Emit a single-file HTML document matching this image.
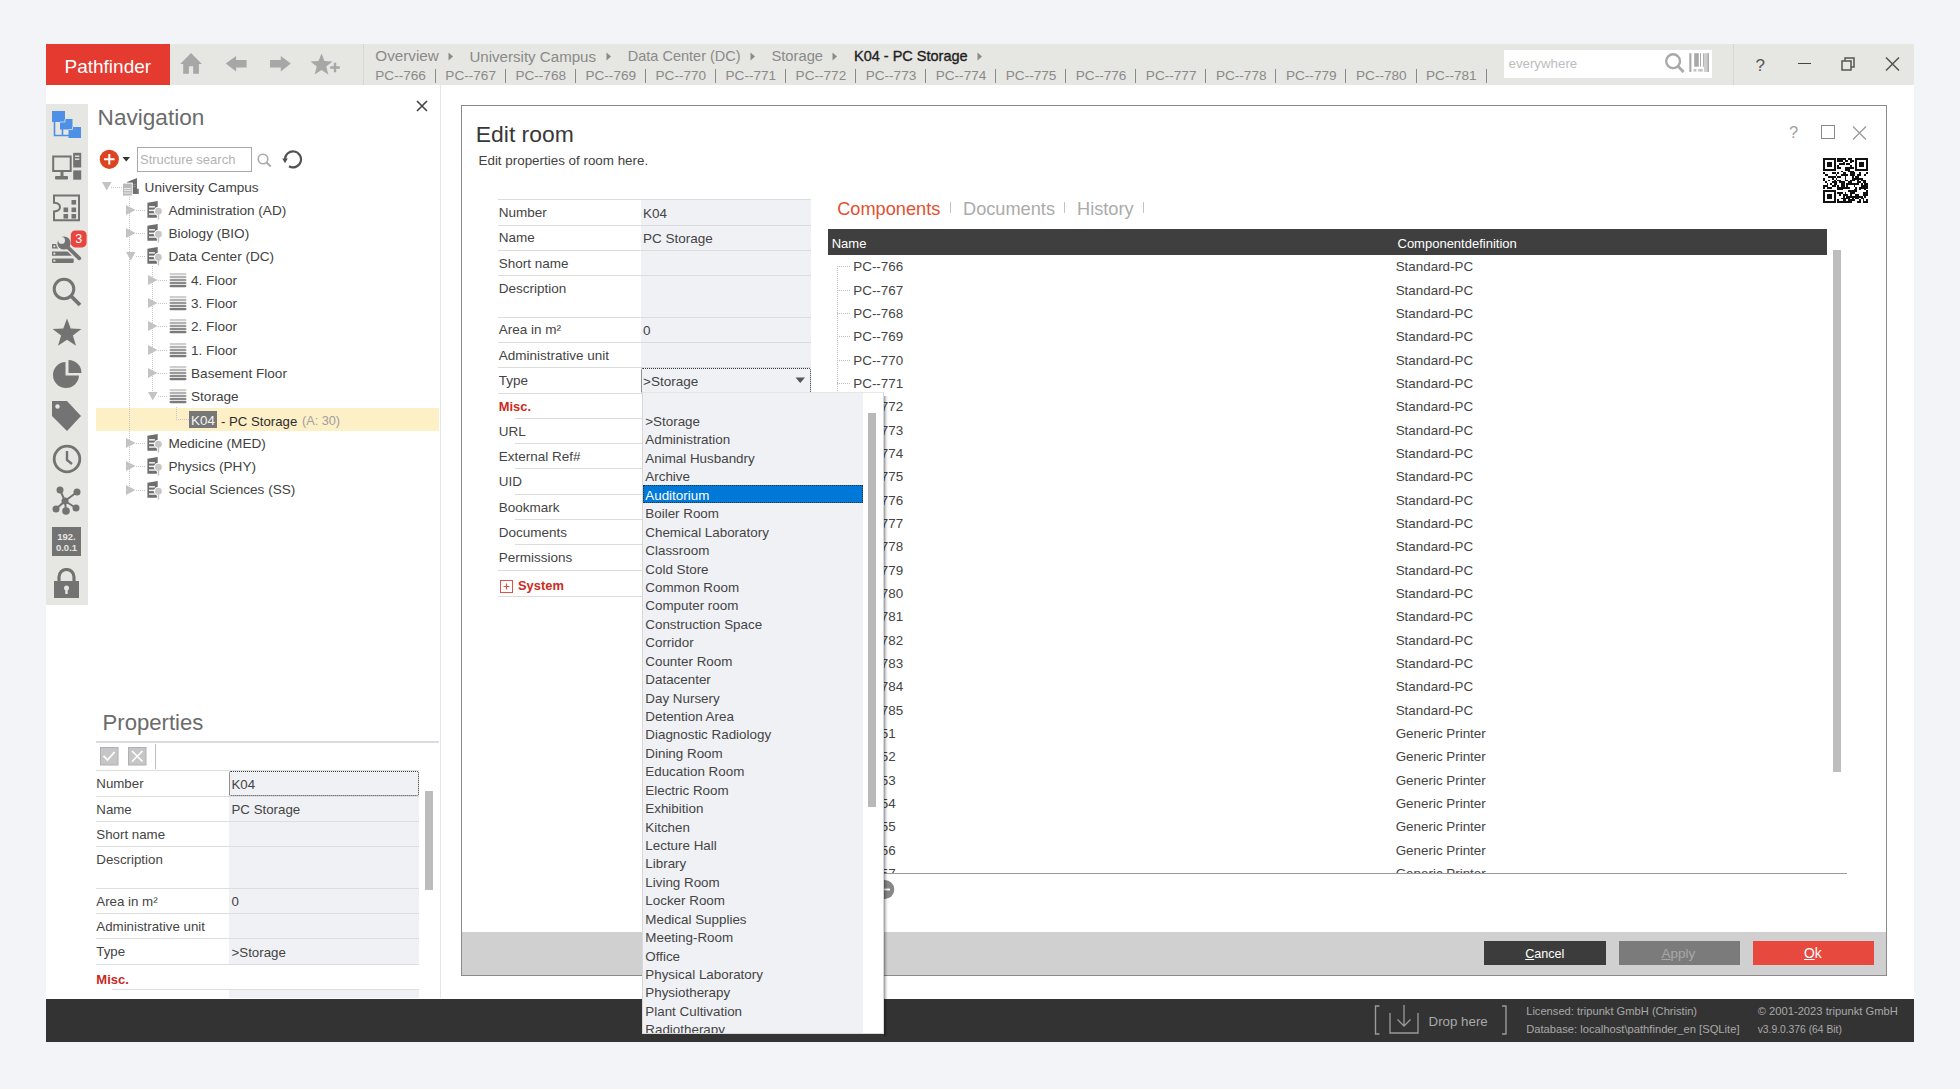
<!DOCTYPE html>
<html><head><meta charset="utf-8"><title>Pathfinder</title>
<style>
html,body{margin:0;padding:0;}
body{width:1960px;height:1089px;background:#f3f4f8;position:relative;overflow:hidden;font-family:"Liberation Sans", sans-serif;}
div{box-sizing:border-box;}
</style></head><body>
<div style="position:absolute;left:46px;top:44px;width:1868px;height:998px;background:#fff"></div>
<div style="position:absolute;left:46px;top:44px;width:1868px;height:41px;background:#e6e6e2"></div>
<div style="position:absolute;left:46px;top:44px;width:124px;height:41px;background:#e53a2f"></div>
<div style="position:absolute;left:64.50px;top:56.92px;font-size:19px;line-height:1;color:#fff;font-weight:400;white-space:pre;">Pathfinder</div>
<svg style="position:absolute;left:180px;top:52px;" width="22" height="22" viewBox="0 0 22 22"><path d="M11 1 L21.9 12 H18.9 V21.8 H13.2 V14.2 H8.9 V21.8 H3.2 V12 H0.2 Z" fill="#a7a7a7"/></svg>
<svg style="position:absolute;left:225px;top:55px;" width="22" height="18" viewBox="0 0 22 18"><path d="M0.7 8.6 L11.1 1 V5.1 H21.6 V12.5 H11.1 V16.4 Z" fill="#a7a7a7"/></svg>
<svg style="position:absolute;left:269px;top:55px;" width="23" height="18" viewBox="0 0 23 18"><path d="M21.8 8.6 L11.8 1 V5.1 H1 V12.5 H11.8 V16.4 Z" fill="#a7a7a7"/></svg>
<svg style="position:absolute;left:310px;top:53px;" width="32" height="22" viewBox="0 0 32 22"><path d="M11.50 0.40 L14.44 7.95 L22.53 8.42 L16.26 13.55 L18.32 21.38 L11.50 17.00 L4.68 21.38 L6.74 13.55 L0.47 8.42 L8.56 7.95 Z" fill="#a7a7a7"/><path d="M20.2 14.5 H29.8 M25 9.7 V19.3" stroke="#a7a7a7" stroke-width="2.4"/></svg>
<div style="position:absolute;left:363px;top:44px;width:1px;height:41px;background:#d6d6d2"></div>
<div style="position:absolute;left:1733px;top:44px;width:1px;height:41px;background:#d6d6d2"></div>
<div style="position:absolute;left:1504px;top:50px;width:208px;height:28px;background:#fff"></div>
<div style="position:absolute;left:1508.50px;top:56.74px;font-size:13.3px;line-height:1;color:#bdbdbd;font-weight:400;white-space:pre;">everywhere</div>
<svg style="position:absolute;left:1655px;top:48px;" width="60" height="32" viewBox="0 0 60 32"><circle cx="18.1" cy="13.2" r="6.9" fill="none" stroke="#a9a9a9" stroke-width="2.4"/><path d="M23 18.3 L28.6 24" stroke="#a9a9a9" stroke-width="2.8"/><rect x="34.3" y="5.2" width="2.1" height="18.7" fill="#a8a8a8"/><rect x="39.2" y="5.2" width="4.6" height="13.5" fill="#a8a8a8"/><rect x="45" y="5.2" width="1" height="13.5" fill="#a8a8a8"/><rect x="48.1" y="5.2" width="1" height="13.5" fill="#a8a8a8"/><rect x="49.1" y="5.2" width="4.8" height="18.7" fill="#cdcdcd"/><rect x="52.6" y="5.2" width="1.3" height="18.7" fill="#a8a8a8"/><rect x="38.5" y="21" width="3" height="2.6" fill="#c4c4c4"/><rect x="43.2" y="21" width="4.5" height="2.6" fill="#c4c4c4"/></svg>
<div style="position:absolute;left:1755.50px;top:56.91px;font-size:17px;line-height:1;color:#555;font-weight:400;white-space:pre;">?</div>
<div style="position:absolute;left:1798px;top:63px;width:13px;height:1px;background:#444"></div>
<svg style="position:absolute;left:1841px;top:57px;" width="15" height="14" viewBox="0 0 15 14"><rect x="1" y="4" width="9" height="9" fill="none" stroke="#555" stroke-width="1.5"/><path d="M4 4 V1 H13 V10 H10" fill="none" stroke="#555" stroke-width="1.5"/></svg>
<svg style="position:absolute;left:1885px;top:57px;" width="15" height="14" viewBox="0 0 15 14"><path d="M1 0.5 L14 13.5 M14 0.5 L1 13.5" stroke="#555" stroke-width="1.5"/></svg>
<div style="position:absolute;left:46px;top:999px;width:1868px;height:43px;background:#333"></div>
<div style="position:absolute;left:46px;top:104px;width:42px;height:501px;background:#e6e6e2"></div>
<svg style="position:absolute;left:51px;top:110px;" width="32" height="29" viewBox="0 0 32 29"><path d="M3.5 10 V25.5 H18 M11.5 18 V25.5" fill="none" stroke="#4d90e6" stroke-width="1.6"/><rect x="1" y="1" width="13" height="11" fill="#4d90e6"/><rect x="9" y="9" width="12.5" height="10.5" fill="#4d90e6"/><rect x="17.5" y="17" width="12.5" height="11" fill="#4d90e6"/><path d="M9 12 H14 V9" fill="none" stroke="#e6e6e2" stroke-width="0.8"/><path d="M17.5 19.5 H21.5 V17" fill="none" stroke="#e6e6e2" stroke-width="0.8"/></svg>
<svg style="position:absolute;left:51px;top:152px;" width="32" height="29" viewBox="0 0 32 29"><rect x="2.2" y="4.5" width="17.5" height="14.5" fill="none" stroke="#737373" stroke-width="2"/><rect x="9.5" y="19" width="3" height="5" fill="#737373"/><rect x="4" y="24" width="13" height="3.5" rx="1" fill="#737373"/><rect x="22.2" y="0.8" width="8" height="14.7" fill="#737373"/><rect x="24" y="3.5" width="4.4" height="1.4" fill="#e6e6e2"/><rect x="24" y="6.5" width="4.4" height="1.4" fill="#e6e6e2"/><rect x="22.2" y="18.4" width="8" height="9.3" fill="#737373"/></svg>
<svg style="position:absolute;left:51px;top:193px;" width="32" height="30" viewBox="0 0 32 30"><path d="M3 2.4 H28 V27.2 H3 V18.5 Q9 18 9 14.3 Q9 10 3 9.8 Z" fill="none" stroke="#737373" stroke-width="2"/><rect x="20.5" y="7" width="4.6" height="4.6" fill="#737373"/><rect x="12.5" y="14.5" width="4.6" height="4.6" fill="#737373"/><rect x="20.5" y="14.5" width="4.6" height="4.6" fill="#737373"/><rect x="12.5" y="21" width="4.6" height="4.6" fill="#737373"/><rect x="20.5" y="21" width="4.6" height="4.6" fill="#737373"/></svg>
<svg style="position:absolute;left:51px;top:230px;" width="37" height="35" viewBox="0 0 37 35"><defs><mask id="wm"><rect x="0" y="0" width="37" height="35" fill="#fff"/><circle cx="10.6" cy="10.4" r="3.4" fill="#000"/><path d="M5 9 L9 5 L11 1 L3 1 L1 3 Z" fill="#000"/><path d="M7.2 10.4 L10.6 7 L6 2.4 L2.6 5.8 Z" fill="#000"/></mask></defs><path d="M1 14.1 H6.5 L10.5 18.5 H1 Z" fill="#737373"/><path d="M1 21.5 H16.8 L21 25.7 H1 Z" fill="#737373"/><rect x="1" y="28.5" width="21.7" height="4.4" rx="1" fill="#737373"/><rect x="2.4" y="15.4" width="1.9" height="1.8" fill="#e6e6e2"/><rect x="2.4" y="22.7" width="1.9" height="1.8" fill="#e6e6e2"/><rect x="2.4" y="29.8" width="1.9" height="1.8" fill="#e6e6e2"/><g mask="url(#wm)"><circle cx="13" cy="13" r="8" fill="#e6e6e2"/></g><path d="M16 16.5 L28.3 28.3" stroke="#e6e6e2" stroke-width="6.2" stroke-linecap="round"/><g mask="url(#wm)"><circle cx="13" cy="13" r="6.6" fill="#737373"/></g><path d="M16 16.5 L28.3 28.3" stroke="#737373" stroke-width="3.8" stroke-linecap="round"/><rect x="19.8" y="0.5" width="15.8" height="16.9" rx="4.5" fill="#e8453f"/><text x="27.7" y="13.3" font-family="Liberation Sans" font-size="12.5" fill="#fff" text-anchor="middle">3</text></svg>
<svg style="position:absolute;left:51px;top:276px;" width="32" height="32" viewBox="0 0 32 32"><circle cx="13" cy="13" r="9.8" fill="none" stroke="#737373" stroke-width="3"/><path d="M20 20 L29 29" stroke="#737373" stroke-width="3.8"/></svg>
<svg style="position:absolute;left:52px;top:318px;" width="30" height="29" viewBox="0 0 30 29"><path d="M15 0.5 L18.7 10.6 L29.4 10.9 L20.9 17.5 L24 27.8 L15 21.7 L6 27.8 L9.1 17.5 L0.6 10.9 L11.3 10.6 Z" fill="#737373"/></svg>
<svg style="position:absolute;left:52px;top:360px;" width="30" height="30" viewBox="0 0 30 30"><path d="M13.5 2 A13 13 0 1 0 27 15.5 L13.5 15.5 Z" fill="#737373"/><path d="M16.5 0 A13 13 0 0 1 29.5 13 L16.5 13 Z" fill="#737373"/></svg>
<svg style="position:absolute;left:52px;top:401px;" width="30" height="31" viewBox="0 0 30 31"><path d="M0 0 H15 L29 15 L15 30 L0 15 Z" fill="#737373"/><circle cx="5.5" cy="5.5" r="2.2" fill="#e6e6e2"/></svg>
<svg style="position:absolute;left:52px;top:444px;" width="30" height="30" viewBox="0 0 30 30"><circle cx="15" cy="15" r="12.8" fill="none" stroke="#737373" stroke-width="2.8"/><path d="M15 7 V16 L20 20" fill="none" stroke="#737373" stroke-width="2.4"/></svg>
<svg style="position:absolute;left:52px;top:486px;" width="30" height="30" viewBox="0 0 30 30"><path d="M8 4 L13 15 L25 6 M13 15 L4 23 M13 15 L14 25 M13 15 L24 22" fill="none" stroke="#737373" stroke-width="2"/><circle cx="8" cy="4" r="3.5" fill="#737373"/><circle cx="25" cy="6" r="3.5" fill="#737373"/><circle cx="13" cy="15" r="3.5" fill="#737373"/><circle cx="4" cy="23" r="3.5" fill="#737373"/><circle cx="14" cy="25" r="3.8" fill="#737373"/><circle cx="24" cy="22" r="3.5" fill="#737373"/></svg>
<svg style="position:absolute;left:52px;top:527px;" width="30" height="30" viewBox="0 0 30 30"><rect x="0" y="0" width="29" height="29" fill="#737373"/><text x="14.5" y="12.5" font-family="Liberation Sans" font-weight="700" font-size="9.5" fill="#e6e6e2" text-anchor="middle">192.</text><text x="14.5" y="24" font-family="Liberation Sans" font-weight="700" font-size="9.5" fill="#e6e6e2" text-anchor="middle">0.0.1</text></svg>
<svg style="position:absolute;left:53px;top:568px;" width="27" height="31" viewBox="0 0 27 31"><path d="M6 14 V9 A7.5 7.5 0 0 1 21 9 V14" fill="none" stroke="#737373" stroke-width="3.2"/><rect x="1" y="13" width="25" height="17" fill="#737373"/><circle cx="13.5" cy="20" r="2.5" fill="#e6e6e2"/><rect x="12.3" y="20" width="2.4" height="6" fill="#e6e6e2"/></svg>
<div style="position:absolute;left:440px;top:85px;width:1px;height:913px;background:#e4e6ea"></div>
<div style="position:absolute;left:97.60px;top:107.17px;font-size:22.6px;line-height:1;color:#6b6b6b;font-weight:300;white-space:pre;">Navigation</div>
<svg style="position:absolute;left:416px;top:100px;" width="12" height="12" viewBox="0 0 12 12"><path d="M1 1 L11 11 M11 1 L1 11" stroke="#444" stroke-width="1.6"/></svg>
<svg style="position:absolute;left:99px;top:149px;" width="21" height="21" viewBox="0 0 21 21"><circle cx="10.3" cy="10.3" r="9.6" fill="#dc4320"/><path d="M10.3 5 V15.6 M5 10.3 H15.6" stroke="#fff" stroke-width="2"/></svg>
<svg style="position:absolute;left:122px;top:157px;" width="9" height="5" viewBox="0 0 9 5"><path d="M0.5 0 H8 L4.25 4.5 Z" fill="#333"/></svg>
<div style="position:absolute;left:137px;top:147px;width:115px;height:25px;border:1px solid #a9a9a9;background:#fff"></div>
<div style="position:absolute;left:140.00px;top:153.30px;font-size:13px;line-height:1;color:#b3b3b3;font-weight:400;white-space:pre;">Structure search</div>
<svg style="position:absolute;left:257px;top:153px;" width="16" height="14" viewBox="0 0 16 14"><circle cx="6" cy="6" r="4.8" fill="none" stroke="#ababab" stroke-width="1.6"/><path d="M9.5 9.5 L13.8 13.5" stroke="#ababab" stroke-width="2"/></svg>
<svg style="position:absolute;left:282px;top:150px;" width="22" height="19" viewBox="0 0 22 19"><path d="M3 9.4 A8 8 0 1 1 7 16.3" fill="none" stroke="#525252" stroke-width="2.2"/><path d="M0.2 8.6 L5.8 8.6 L3 13.2 Z" fill="#525252"/></svg>
<div style="position:absolute;left:96px;top:408px;width:343px;height:23px;background:#fdefc6"></div>
<div style="position:absolute;left:129px;top:197px;width:1px;height:293px;background:repeating-linear-gradient(180deg,#c6c6c6 0 1px,transparent 1px 2px)"></div>
<div style="position:absolute;left:152px;top:266px;width:1px;height:132px;background:repeating-linear-gradient(180deg,#c6c6c6 0 1px,transparent 1px 2px)"></div>
<div style="position:absolute;left:176px;top:407px;width:1px;height:13px;background:repeating-linear-gradient(180deg,#c6c6c6 0 1px,transparent 1px 2px)"></div>
<div style="position:absolute;left:176px;top:419px;width:13px;height:1px;background:repeating-linear-gradient(90deg,#c6c6c6 0 1px,transparent 1px 2px)"></div>
<div style="position:absolute;left:111px;top:186.5px;width:12px;height:1px;background:repeating-linear-gradient(90deg,#c6c6c6 0 1px,transparent 1px 2px)"></div>
<svg style="position:absolute;left:101.5px;top:182.1px;" width="10" height="9" viewBox="0 0 10 9"><path d="M0 0 H9.5 L4.75 8.5 Z" fill="#c3c3c3"/></svg>
<svg style="position:absolute;left:122px;top:178px;" width="18" height="19" viewBox="0 0 18 19"><path d="M5 4 L15 0 V16 H5 Z" fill="#6e6e6e"/><rect x="15" y="10.7" width="1.8" height="5.3" fill="#7a7a7a"/><rect x="11.5" y="6" width="2" height="1" fill="#999"/><rect x="11.5" y="8" width="2" height="1" fill="#999"/><rect x="0" y="4.6" width="10.8" height="14" fill="#fff"/><rect x="1" y="5.6" width="8.8" height="12" fill="#b9b9b9"/><rect x="2" y="10" width="6.8" height="1.1" fill="#e8e8e8"/><rect x="2" y="12" width="6.8" height="1.1" fill="#e8e8e8"/><rect x="2" y="14.5" width="6.8" height="1.1" fill="#e8e8e8"/></svg>
<div style="position:absolute;left:144.60px;top:180.59px;font-size:13.6px;line-height:1;color:#424242;font-weight:400;white-space:pre;">University Campus</div>
<svg style="position:absolute;left:125.8px;top:204.9px;" width="10" height="10" viewBox="0 0 10 10"><path d="M0 0 L9.5 5 L0 10 Z" fill="#c3c3c3"/></svg>
<div style="position:absolute;left:135.8px;top:210px;width:10.0px;height:1px;background:repeating-linear-gradient(90deg,#c6c6c6 0 1px,transparent 1px 2px)"></div>
<svg style="position:absolute;left:147px;top:201px;" width="16" height="20" viewBox="0 0 16 20"><path d="M0.4 1.7 L10.7 0 V16.8 H0.4 Z" fill="#6e6e6e"/><rect x="2" y="5.1" width="5.9" height="1.5" fill="#f2f2f2"/><rect x="2" y="8.6" width="5.9" height="1.5" fill="#f2f2f2"/><rect x="2" y="12.3" width="5.9" height="1.5" fill="#f2f2f2"/><circle cx="11.4" cy="10.2" r="4.5" fill="#fff"/><rect x="9.9" y="12" width="3" height="7.5" fill="#fff"/><circle cx="11.4" cy="10.2" r="3.4" fill="#c6c6c6"/><rect x="10.7" y="12.5" width="1.5" height="6" fill="#c6c6c6"/></svg>
<div style="position:absolute;left:168.40px;top:203.89px;font-size:13.6px;line-height:1;color:#424242;font-weight:400;white-space:pre;">Administration (AD)</div>
<svg style="position:absolute;left:125.8px;top:228.2px;" width="10" height="10" viewBox="0 0 10 10"><path d="M0 0 L9.5 5 L0 10 Z" fill="#c3c3c3"/></svg>
<div style="position:absolute;left:135.8px;top:233px;width:10.0px;height:1px;background:repeating-linear-gradient(90deg,#c6c6c6 0 1px,transparent 1px 2px)"></div>
<svg style="position:absolute;left:147px;top:224px;" width="16" height="20" viewBox="0 0 16 20"><path d="M0.4 1.7 L10.7 0 V16.8 H0.4 Z" fill="#6e6e6e"/><rect x="2" y="5.1" width="5.9" height="1.5" fill="#f2f2f2"/><rect x="2" y="8.6" width="5.9" height="1.5" fill="#f2f2f2"/><rect x="2" y="12.3" width="5.9" height="1.5" fill="#f2f2f2"/><circle cx="11.4" cy="10.2" r="4.5" fill="#fff"/><rect x="9.9" y="12" width="3" height="7.5" fill="#fff"/><circle cx="11.4" cy="10.2" r="3.4" fill="#c6c6c6"/><rect x="10.7" y="12.5" width="1.5" height="6" fill="#c6c6c6"/></svg>
<div style="position:absolute;left:168.40px;top:227.19px;font-size:13.6px;line-height:1;color:#424242;font-weight:400;white-space:pre;">Biology (BIO)</div>
<svg style="position:absolute;left:125.8px;top:252.0px;" width="10" height="9" viewBox="0 0 10 9"><path d="M0 0 H9.5 L4.75 8.5 Z" fill="#c3c3c3"/></svg>
<div style="position:absolute;left:135.8px;top:256px;width:10.0px;height:1px;background:repeating-linear-gradient(90deg,#c6c6c6 0 1px,transparent 1px 2px)"></div>
<svg style="position:absolute;left:147px;top:247px;" width="16" height="20" viewBox="0 0 16 20"><path d="M0.4 1.7 L10.7 0 V16.8 H0.4 Z" fill="#6e6e6e"/><rect x="2" y="5.1" width="5.9" height="1.5" fill="#f2f2f2"/><rect x="2" y="8.6" width="5.9" height="1.5" fill="#f2f2f2"/><rect x="2" y="12.3" width="5.9" height="1.5" fill="#f2f2f2"/><circle cx="11.4" cy="10.2" r="4.5" fill="#fff"/><rect x="9.9" y="12" width="3" height="7.5" fill="#fff"/><circle cx="11.4" cy="10.2" r="3.4" fill="#c6c6c6"/><rect x="10.7" y="12.5" width="1.5" height="6" fill="#c6c6c6"/></svg>
<div style="position:absolute;left:168.40px;top:250.49px;font-size:13.6px;line-height:1;color:#424242;font-weight:400;white-space:pre;">Data Center (DC)</div>
<svg style="position:absolute;left:148.3px;top:274.8px;" width="10" height="10" viewBox="0 0 10 10"><path d="M0 0 L9.5 5 L0 10 Z" fill="#c3c3c3"/></svg>
<div style="position:absolute;left:158.3px;top:280px;width:10.0px;height:1px;background:repeating-linear-gradient(90deg,#c6c6c6 0 1px,transparent 1px 2px)"></div>
<svg style="position:absolute;left:169px;top:273px;" width="18" height="15" viewBox="0 0 18 15"><rect x="0.5" y="0" width="17" height="2.2" rx="1.1" fill="#cfcfcf"/><rect x="0.5" y="3" width="17" height="2.2" rx="1.1" fill="#b3b3b3"/><rect x="0.5" y="6" width="17" height="2.2" rx="1.1" fill="#9a9a9a"/><rect x="0.5" y="9" width="17" height="2.2" rx="1.1" fill="#8a8a8a"/><rect x="0.5" y="12" width="17" height="2.2" rx="1.1" fill="#7a7a7a"/></svg>
<div style="position:absolute;left:191.00px;top:273.79px;font-size:13.6px;line-height:1;color:#424242;font-weight:400;white-space:pre;">4. Floor</div>
<svg style="position:absolute;left:148.3px;top:298.1px;" width="10" height="10" viewBox="0 0 10 10"><path d="M0 0 L9.5 5 L0 10 Z" fill="#c3c3c3"/></svg>
<div style="position:absolute;left:158.3px;top:303px;width:10.0px;height:1px;background:repeating-linear-gradient(90deg,#c6c6c6 0 1px,transparent 1px 2px)"></div>
<svg style="position:absolute;left:169px;top:296px;" width="18" height="15" viewBox="0 0 18 15"><rect x="0.5" y="0" width="17" height="2.2" rx="1.1" fill="#cfcfcf"/><rect x="0.5" y="3" width="17" height="2.2" rx="1.1" fill="#b3b3b3"/><rect x="0.5" y="6" width="17" height="2.2" rx="1.1" fill="#9a9a9a"/><rect x="0.5" y="9" width="17" height="2.2" rx="1.1" fill="#8a8a8a"/><rect x="0.5" y="12" width="17" height="2.2" rx="1.1" fill="#7a7a7a"/></svg>
<div style="position:absolute;left:191.00px;top:297.09px;font-size:13.6px;line-height:1;color:#424242;font-weight:400;white-space:pre;">3. Floor</div>
<svg style="position:absolute;left:148.3px;top:321.4px;" width="10" height="10" viewBox="0 0 10 10"><path d="M0 0 L9.5 5 L0 10 Z" fill="#c3c3c3"/></svg>
<div style="position:absolute;left:158.3px;top:326px;width:10.0px;height:1px;background:repeating-linear-gradient(90deg,#c6c6c6 0 1px,transparent 1px 2px)"></div>
<svg style="position:absolute;left:169px;top:319px;" width="18" height="15" viewBox="0 0 18 15"><rect x="0.5" y="0" width="17" height="2.2" rx="1.1" fill="#cfcfcf"/><rect x="0.5" y="3" width="17" height="2.2" rx="1.1" fill="#b3b3b3"/><rect x="0.5" y="6" width="17" height="2.2" rx="1.1" fill="#9a9a9a"/><rect x="0.5" y="9" width="17" height="2.2" rx="1.1" fill="#8a8a8a"/><rect x="0.5" y="12" width="17" height="2.2" rx="1.1" fill="#7a7a7a"/></svg>
<div style="position:absolute;left:191.00px;top:320.39px;font-size:13.6px;line-height:1;color:#424242;font-weight:400;white-space:pre;">2. Floor</div>
<svg style="position:absolute;left:148.3px;top:344.7px;" width="10" height="10" viewBox="0 0 10 10"><path d="M0 0 L9.5 5 L0 10 Z" fill="#c3c3c3"/></svg>
<div style="position:absolute;left:158.3px;top:350px;width:10.0px;height:1px;background:repeating-linear-gradient(90deg,#c6c6c6 0 1px,transparent 1px 2px)"></div>
<svg style="position:absolute;left:169px;top:343px;" width="18" height="15" viewBox="0 0 18 15"><rect x="0.5" y="0" width="17" height="2.2" rx="1.1" fill="#cfcfcf"/><rect x="0.5" y="3" width="17" height="2.2" rx="1.1" fill="#b3b3b3"/><rect x="0.5" y="6" width="17" height="2.2" rx="1.1" fill="#9a9a9a"/><rect x="0.5" y="9" width="17" height="2.2" rx="1.1" fill="#8a8a8a"/><rect x="0.5" y="12" width="17" height="2.2" rx="1.1" fill="#7a7a7a"/></svg>
<div style="position:absolute;left:191.00px;top:343.69px;font-size:13.6px;line-height:1;color:#424242;font-weight:400;white-space:pre;">1. Floor</div>
<svg style="position:absolute;left:148.3px;top:368.0px;" width="10" height="10" viewBox="0 0 10 10"><path d="M0 0 L9.5 5 L0 10 Z" fill="#c3c3c3"/></svg>
<div style="position:absolute;left:158.3px;top:373px;width:10.0px;height:1px;background:repeating-linear-gradient(90deg,#c6c6c6 0 1px,transparent 1px 2px)"></div>
<svg style="position:absolute;left:169px;top:366px;" width="18" height="15" viewBox="0 0 18 15"><rect x="0.5" y="0" width="17" height="2.2" rx="1.1" fill="#cfcfcf"/><rect x="0.5" y="3" width="17" height="2.2" rx="1.1" fill="#b3b3b3"/><rect x="0.5" y="6" width="17" height="2.2" rx="1.1" fill="#9a9a9a"/><rect x="0.5" y="9" width="17" height="2.2" rx="1.1" fill="#8a8a8a"/><rect x="0.5" y="12" width="17" height="2.2" rx="1.1" fill="#7a7a7a"/></svg>
<div style="position:absolute;left:191.00px;top:366.99px;font-size:13.6px;line-height:1;color:#424242;font-weight:400;white-space:pre;">Basement Floor</div>
<svg style="position:absolute;left:148.3px;top:391.8px;" width="10" height="9" viewBox="0 0 10 9"><path d="M0 0 H9.5 L4.75 8.5 Z" fill="#c3c3c3"/></svg>
<div style="position:absolute;left:158.3px;top:396px;width:10.0px;height:1px;background:repeating-linear-gradient(90deg,#c6c6c6 0 1px,transparent 1px 2px)"></div>
<svg style="position:absolute;left:169px;top:389px;" width="18" height="15" viewBox="0 0 18 15"><rect x="0.5" y="0" width="17" height="2.2" rx="1.1" fill="#cfcfcf"/><rect x="0.5" y="3" width="17" height="2.2" rx="1.1" fill="#b3b3b3"/><rect x="0.5" y="6" width="17" height="2.2" rx="1.1" fill="#9a9a9a"/><rect x="0.5" y="9" width="17" height="2.2" rx="1.1" fill="#8a8a8a"/><rect x="0.5" y="12" width="17" height="2.2" rx="1.1" fill="#7a7a7a"/></svg>
<div style="position:absolute;left:191.00px;top:390.29px;font-size:13.6px;line-height:1;color:#424242;font-weight:400;white-space:pre;">Storage</div>
<div style="position:absolute;left:189px;top:411px;width:28px;height:17px;background:#777"></div>
<div style="position:absolute;left:191.00px;top:414.46px;font-size:13.4px;line-height:1;color:#f4f4f4;font-weight:400;white-space:pre;">K04</div>
<div style="position:absolute;left:221.00px;top:414.63px;font-size:13.2px;line-height:1;color:#2d2d2d;font-weight:400;white-space:pre;">- PC Storage</div>
<div style="position:absolute;left:302.00px;top:415.05px;font-size:12.7px;line-height:1;color:#a0a0a0;font-weight:400;white-space:pre;">(A: 30)</div>
<svg style="position:absolute;left:125.8px;top:437.9px;" width="10" height="10" viewBox="0 0 10 10"><path d="M0 0 L9.5 5 L0 10 Z" fill="#c3c3c3"/></svg>
<div style="position:absolute;left:135.8px;top:443px;width:10.0px;height:1px;background:repeating-linear-gradient(90deg,#c6c6c6 0 1px,transparent 1px 2px)"></div>
<svg style="position:absolute;left:147px;top:434px;" width="16" height="20" viewBox="0 0 16 20"><path d="M0.4 1.7 L10.7 0 V16.8 H0.4 Z" fill="#6e6e6e"/><rect x="2" y="5.1" width="5.9" height="1.5" fill="#f2f2f2"/><rect x="2" y="8.6" width="5.9" height="1.5" fill="#f2f2f2"/><rect x="2" y="12.3" width="5.9" height="1.5" fill="#f2f2f2"/><circle cx="11.4" cy="10.2" r="4.5" fill="#fff"/><rect x="9.9" y="12" width="3" height="7.5" fill="#fff"/><circle cx="11.4" cy="10.2" r="3.4" fill="#c6c6c6"/><rect x="10.7" y="12.5" width="1.5" height="6" fill="#c6c6c6"/></svg>
<div style="position:absolute;left:168.40px;top:436.89px;font-size:13.6px;line-height:1;color:#424242;font-weight:400;white-space:pre;">Medicine (MED)</div>
<svg style="position:absolute;left:125.8px;top:461.20000000000005px;" width="10" height="10" viewBox="0 0 10 10"><path d="M0 0 L9.5 5 L0 10 Z" fill="#c3c3c3"/></svg>
<div style="position:absolute;left:135.8px;top:466px;width:10.0px;height:1px;background:repeating-linear-gradient(90deg,#c6c6c6 0 1px,transparent 1px 2px)"></div>
<svg style="position:absolute;left:147px;top:457px;" width="16" height="20" viewBox="0 0 16 20"><path d="M0.4 1.7 L10.7 0 V16.8 H0.4 Z" fill="#6e6e6e"/><rect x="2" y="5.1" width="5.9" height="1.5" fill="#f2f2f2"/><rect x="2" y="8.6" width="5.9" height="1.5" fill="#f2f2f2"/><rect x="2" y="12.3" width="5.9" height="1.5" fill="#f2f2f2"/><circle cx="11.4" cy="10.2" r="4.5" fill="#fff"/><rect x="9.9" y="12" width="3" height="7.5" fill="#fff"/><circle cx="11.4" cy="10.2" r="3.4" fill="#c6c6c6"/><rect x="10.7" y="12.5" width="1.5" height="6" fill="#c6c6c6"/></svg>
<div style="position:absolute;left:168.40px;top:460.19px;font-size:13.6px;line-height:1;color:#424242;font-weight:400;white-space:pre;">Physics (PHY)</div>
<svg style="position:absolute;left:125.8px;top:484.5px;" width="10" height="10" viewBox="0 0 10 10"><path d="M0 0 L9.5 5 L0 10 Z" fill="#c3c3c3"/></svg>
<div style="position:absolute;left:135.8px;top:490px;width:10.0px;height:1px;background:repeating-linear-gradient(90deg,#c6c6c6 0 1px,transparent 1px 2px)"></div>
<svg style="position:absolute;left:147px;top:481px;" width="16" height="20" viewBox="0 0 16 20"><path d="M0.4 1.7 L10.7 0 V16.8 H0.4 Z" fill="#6e6e6e"/><rect x="2" y="5.1" width="5.9" height="1.5" fill="#f2f2f2"/><rect x="2" y="8.6" width="5.9" height="1.5" fill="#f2f2f2"/><rect x="2" y="12.3" width="5.9" height="1.5" fill="#f2f2f2"/><circle cx="11.4" cy="10.2" r="4.5" fill="#fff"/><rect x="9.9" y="12" width="3" height="7.5" fill="#fff"/><circle cx="11.4" cy="10.2" r="3.4" fill="#c6c6c6"/><rect x="10.7" y="12.5" width="1.5" height="6" fill="#c6c6c6"/></svg>
<div style="position:absolute;left:168.40px;top:483.49px;font-size:13.6px;line-height:1;color:#424242;font-weight:400;white-space:pre;">Social Sciences (SS)</div>
<div style="position:absolute;left:102.60px;top:711.79px;font-size:22.1px;line-height:1;color:#6b6b6b;font-weight:300;white-space:pre;">Properties</div>
<div style="position:absolute;left:96px;top:741px;width:343px;height:2px;background:#d9dce3"></div>
<svg style="position:absolute;left:100px;top:747px;" width="19" height="19" viewBox="0 0 19 19"><rect x="0.5" y="0.5" width="17.5" height="17.5" fill="#c6c6c6" stroke="#b0b0b0"/><path d="M3.5 9 L7.5 13 L14.5 5" fill="none" stroke="#fff" stroke-width="1.8"/></svg>
<svg style="position:absolute;left:128px;top:747px;" width="19" height="19" viewBox="0 0 19 19"><rect x="0.5" y="0.5" width="17.5" height="17.5" fill="#c6c6c6" stroke="#b0b0b0"/><path d="M4 4 L14.5 14.5 M14.5 4 L4 14.5" fill="none" stroke="#fff" stroke-width="1.6"/></svg>
<div style="position:absolute;left:155px;top:744px;width:1px;height:25px;background:#bdbdbd"></div>
<div style="position:absolute;left:229px;top:771px;width:190px;height:193px;background:#f0f1f5"></div>
<div style="position:absolute;left:229px;top:990px;width:190px;height:8px;background:#f0f1f5"></div>
<div style="position:absolute;left:96px;top:770px;width:323px;height:1px;background:#dedede"></div>
<div style="position:absolute;left:96px;top:796px;width:323px;height:1px;background:#dedede"></div>
<div style="position:absolute;left:96px;top:821px;width:323px;height:1px;background:#dedede"></div>
<div style="position:absolute;left:96px;top:846px;width:323px;height:1px;background:#dedede"></div>
<div style="position:absolute;left:96px;top:888px;width:323px;height:1px;background:#dedede"></div>
<div style="position:absolute;left:96px;top:913px;width:323px;height:1px;background:#dedede"></div>
<div style="position:absolute;left:96px;top:938px;width:323px;height:1px;background:#dedede"></div>
<div style="position:absolute;left:96px;top:964px;width:323px;height:1px;background:#dedede"></div>
<div style="position:absolute;left:112px;top:989px;width:307px;height:1px;background:#dedede"></div>
<div style="position:absolute;left:229px;top:771px;width:190px;height:25px;border:1px dotted #333;border-radius:2px"></div>
<div style="position:absolute;left:96.30px;top:777.14px;font-size:13.3px;line-height:1;color:#444444;font-weight:400;white-space:pre;">Number</div>
<div style="position:absolute;left:231.50px;top:777.64px;font-size:13.3px;line-height:1;color:#444444;font-weight:400;white-space:pre;">K04</div>
<div style="position:absolute;left:96.30px;top:802.64px;font-size:13.3px;line-height:1;color:#444444;font-weight:400;white-space:pre;">Name</div>
<div style="position:absolute;left:231.50px;top:803.14px;font-size:13.3px;line-height:1;color:#444444;font-weight:400;white-space:pre;">PC Storage</div>
<div style="position:absolute;left:96.30px;top:827.84px;font-size:13.3px;line-height:1;color:#444444;font-weight:400;white-space:pre;">Short name</div>
<div style="position:absolute;left:96.30px;top:852.94px;font-size:13.3px;line-height:1;color:#444444;font-weight:400;white-space:pre;">Description</div>
<div style="position:absolute;left:96.30px;top:894.74px;font-size:13.3px;line-height:1;color:#444444;font-weight:400;white-space:pre;">Area in m²</div>
<div style="position:absolute;left:231.50px;top:895.24px;font-size:13.3px;line-height:1;color:#444444;font-weight:400;white-space:pre;">0</div>
<div style="position:absolute;left:96.30px;top:919.84px;font-size:13.3px;line-height:1;color:#444444;font-weight:400;white-space:pre;">Administrative unit</div>
<div style="position:absolute;left:96.30px;top:945.04px;font-size:13.3px;line-height:1;color:#444444;font-weight:400;white-space:pre;">Type</div>
<div style="position:absolute;left:231.50px;top:945.54px;font-size:13.3px;line-height:1;color:#444444;font-weight:400;white-space:pre;">&gt;Storage</div>
<div style="position:absolute;left:96.30px;top:972.50px;font-size:13px;line-height:1;color:#c8281e;font-weight:700;white-space:pre;">Misc.</div>
<div style="position:absolute;left:425px;top:791px;width:8px;height:99px;background:#bcbcbc"></div>
<div style="position:absolute;left:461px;top:105px;width:1426px;height:871px;border:1px solid #8a8a8a;background:#fff"></div>
<div style="position:absolute;left:475.80px;top:122.72px;font-size:22.9px;line-height:1;color:#383838;font-weight:400;white-space:pre;">Edit room</div>
<div style="position:absolute;left:478.50px;top:154.46px;font-size:13.4px;line-height:1;color:#424242;font-weight:400;white-space:pre;">Edit properties of room here.</div>
<div style="position:absolute;left:1789.00px;top:124.33px;font-size:16.5px;line-height:1;color:#a0a0a0;font-weight:400;white-space:pre;">?</div>
<div style="position:absolute;left:1821px;top:125px;width:14px;height:14px;border:1.5px solid #8a8a8a"></div>
<svg style="position:absolute;left:1852px;top:126px;" width="15" height="14" viewBox="0 0 15 14"><path d="M1 0.5 L14 13.5 M14 0.5 L1 13.5" stroke="#9a9a9a" stroke-width="1.3"/></svg>
<svg style="position:absolute;left:1823px;top:158px;" width="46" height="46" viewBox="0 0 46 46"><g fill="#111" shape-rendering="crispEdges"><rect x="0.00" y="0.00" width="1.85" height="1.85"/><rect x="1.80" y="0.00" width="1.85" height="1.85"/><rect x="3.60" y="0.00" width="1.85" height="1.85"/><rect x="5.40" y="0.00" width="1.85" height="1.85"/><rect x="7.20" y="0.00" width="1.85" height="1.85"/><rect x="9.00" y="0.00" width="1.85" height="1.85"/><rect x="10.80" y="0.00" width="1.85" height="1.85"/><rect x="14.40" y="0.00" width="1.85" height="1.85"/><rect x="16.20" y="0.00" width="1.85" height="1.85"/><rect x="18.00" y="0.00" width="1.85" height="1.85"/><rect x="19.80" y="0.00" width="1.85" height="1.85"/><rect x="21.60" y="0.00" width="1.85" height="1.85"/><rect x="25.20" y="0.00" width="1.85" height="1.85"/><rect x="27.00" y="0.00" width="1.85" height="1.85"/><rect x="32.40" y="0.00" width="1.85" height="1.85"/><rect x="34.20" y="0.00" width="1.85" height="1.85"/><rect x="36.00" y="0.00" width="1.85" height="1.85"/><rect x="37.80" y="0.00" width="1.85" height="1.85"/><rect x="39.60" y="0.00" width="1.85" height="1.85"/><rect x="41.40" y="0.00" width="1.85" height="1.85"/><rect x="43.20" y="0.00" width="1.85" height="1.85"/><rect x="0.00" y="1.80" width="1.85" height="1.85"/><rect x="10.80" y="1.80" width="1.85" height="1.85"/><rect x="14.40" y="1.80" width="1.85" height="1.85"/><rect x="16.20" y="1.80" width="1.85" height="1.85"/><rect x="18.00" y="1.80" width="1.85" height="1.85"/><rect x="21.60" y="1.80" width="1.85" height="1.85"/><rect x="23.40" y="1.80" width="1.85" height="1.85"/><rect x="27.00" y="1.80" width="1.85" height="1.85"/><rect x="28.80" y="1.80" width="1.85" height="1.85"/><rect x="32.40" y="1.80" width="1.85" height="1.85"/><rect x="43.20" y="1.80" width="1.85" height="1.85"/><rect x="0.00" y="3.60" width="1.85" height="1.85"/><rect x="3.60" y="3.60" width="1.85" height="1.85"/><rect x="5.40" y="3.60" width="1.85" height="1.85"/><rect x="7.20" y="3.60" width="1.85" height="1.85"/><rect x="10.80" y="3.60" width="1.85" height="1.85"/><rect x="19.80" y="3.60" width="1.85" height="1.85"/><rect x="27.00" y="3.60" width="1.85" height="1.85"/><rect x="32.40" y="3.60" width="1.85" height="1.85"/><rect x="36.00" y="3.60" width="1.85" height="1.85"/><rect x="37.80" y="3.60" width="1.85" height="1.85"/><rect x="39.60" y="3.60" width="1.85" height="1.85"/><rect x="43.20" y="3.60" width="1.85" height="1.85"/><rect x="0.00" y="5.40" width="1.85" height="1.85"/><rect x="3.60" y="5.40" width="1.85" height="1.85"/><rect x="5.40" y="5.40" width="1.85" height="1.85"/><rect x="7.20" y="5.40" width="1.85" height="1.85"/><rect x="10.80" y="5.40" width="1.85" height="1.85"/><rect x="16.20" y="5.40" width="1.85" height="1.85"/><rect x="18.00" y="5.40" width="1.85" height="1.85"/><rect x="19.80" y="5.40" width="1.85" height="1.85"/><rect x="23.40" y="5.40" width="1.85" height="1.85"/><rect x="25.20" y="5.40" width="1.85" height="1.85"/><rect x="32.40" y="5.40" width="1.85" height="1.85"/><rect x="36.00" y="5.40" width="1.85" height="1.85"/><rect x="37.80" y="5.40" width="1.85" height="1.85"/><rect x="39.60" y="5.40" width="1.85" height="1.85"/><rect x="43.20" y="5.40" width="1.85" height="1.85"/><rect x="0.00" y="7.20" width="1.85" height="1.85"/><rect x="3.60" y="7.20" width="1.85" height="1.85"/><rect x="5.40" y="7.20" width="1.85" height="1.85"/><rect x="7.20" y="7.20" width="1.85" height="1.85"/><rect x="10.80" y="7.20" width="1.85" height="1.85"/><rect x="14.40" y="7.20" width="1.85" height="1.85"/><rect x="27.00" y="7.20" width="1.85" height="1.85"/><rect x="32.40" y="7.20" width="1.85" height="1.85"/><rect x="36.00" y="7.20" width="1.85" height="1.85"/><rect x="37.80" y="7.20" width="1.85" height="1.85"/><rect x="39.60" y="7.20" width="1.85" height="1.85"/><rect x="43.20" y="7.20" width="1.85" height="1.85"/><rect x="0.00" y="9.00" width="1.85" height="1.85"/><rect x="10.80" y="9.00" width="1.85" height="1.85"/><rect x="14.40" y="9.00" width="1.85" height="1.85"/><rect x="16.20" y="9.00" width="1.85" height="1.85"/><rect x="21.60" y="9.00" width="1.85" height="1.85"/><rect x="23.40" y="9.00" width="1.85" height="1.85"/><rect x="25.20" y="9.00" width="1.85" height="1.85"/><rect x="27.00" y="9.00" width="1.85" height="1.85"/><rect x="28.80" y="9.00" width="1.85" height="1.85"/><rect x="32.40" y="9.00" width="1.85" height="1.85"/><rect x="43.20" y="9.00" width="1.85" height="1.85"/><rect x="0.00" y="10.80" width="1.85" height="1.85"/><rect x="1.80" y="10.80" width="1.85" height="1.85"/><rect x="3.60" y="10.80" width="1.85" height="1.85"/><rect x="5.40" y="10.80" width="1.85" height="1.85"/><rect x="7.20" y="10.80" width="1.85" height="1.85"/><rect x="9.00" y="10.80" width="1.85" height="1.85"/><rect x="10.80" y="10.80" width="1.85" height="1.85"/><rect x="21.60" y="10.80" width="1.85" height="1.85"/><rect x="23.40" y="10.80" width="1.85" height="1.85"/><rect x="25.20" y="10.80" width="1.85" height="1.85"/><rect x="32.40" y="10.80" width="1.85" height="1.85"/><rect x="34.20" y="10.80" width="1.85" height="1.85"/><rect x="36.00" y="10.80" width="1.85" height="1.85"/><rect x="37.80" y="10.80" width="1.85" height="1.85"/><rect x="39.60" y="10.80" width="1.85" height="1.85"/><rect x="41.40" y="10.80" width="1.85" height="1.85"/><rect x="43.20" y="10.80" width="1.85" height="1.85"/><rect x="18.00" y="12.60" width="1.85" height="1.85"/><rect x="25.20" y="12.60" width="1.85" height="1.85"/><rect x="27.00" y="12.60" width="1.85" height="1.85"/><rect x="28.80" y="12.60" width="1.85" height="1.85"/><rect x="0.00" y="14.40" width="1.85" height="1.85"/><rect x="9.00" y="14.40" width="1.85" height="1.85"/><rect x="10.80" y="14.40" width="1.85" height="1.85"/><rect x="14.40" y="14.40" width="1.85" height="1.85"/><rect x="19.80" y="14.40" width="1.85" height="1.85"/><rect x="21.60" y="14.40" width="1.85" height="1.85"/><rect x="27.00" y="14.40" width="1.85" height="1.85"/><rect x="28.80" y="14.40" width="1.85" height="1.85"/><rect x="30.60" y="14.40" width="1.85" height="1.85"/><rect x="36.00" y="14.40" width="1.85" height="1.85"/><rect x="43.20" y="14.40" width="1.85" height="1.85"/><rect x="1.80" y="16.20" width="1.85" height="1.85"/><rect x="3.60" y="16.20" width="1.85" height="1.85"/><rect x="12.60" y="16.20" width="1.85" height="1.85"/><rect x="18.00" y="16.20" width="1.85" height="1.85"/><rect x="19.80" y="16.20" width="1.85" height="1.85"/><rect x="21.60" y="16.20" width="1.85" height="1.85"/><rect x="23.40" y="16.20" width="1.85" height="1.85"/><rect x="27.00" y="16.20" width="1.85" height="1.85"/><rect x="28.80" y="16.20" width="1.85" height="1.85"/><rect x="30.60" y="16.20" width="1.85" height="1.85"/><rect x="34.20" y="16.20" width="1.85" height="1.85"/><rect x="36.00" y="16.20" width="1.85" height="1.85"/><rect x="41.40" y="16.20" width="1.85" height="1.85"/><rect x="5.40" y="18.00" width="1.85" height="1.85"/><rect x="7.20" y="18.00" width="1.85" height="1.85"/><rect x="9.00" y="18.00" width="1.85" height="1.85"/><rect x="10.80" y="18.00" width="1.85" height="1.85"/><rect x="14.40" y="18.00" width="1.85" height="1.85"/><rect x="16.20" y="18.00" width="1.85" height="1.85"/><rect x="21.60" y="18.00" width="1.85" height="1.85"/><rect x="28.80" y="18.00" width="1.85" height="1.85"/><rect x="32.40" y="18.00" width="1.85" height="1.85"/><rect x="34.20" y="18.00" width="1.85" height="1.85"/><rect x="0.00" y="19.80" width="1.85" height="1.85"/><rect x="9.00" y="19.80" width="1.85" height="1.85"/><rect x="12.60" y="19.80" width="1.85" height="1.85"/><rect x="21.60" y="19.80" width="1.85" height="1.85"/><rect x="28.80" y="19.80" width="1.85" height="1.85"/><rect x="30.60" y="19.80" width="1.85" height="1.85"/><rect x="32.40" y="19.80" width="1.85" height="1.85"/><rect x="34.20" y="19.80" width="1.85" height="1.85"/><rect x="36.00" y="19.80" width="1.85" height="1.85"/><rect x="37.80" y="19.80" width="1.85" height="1.85"/><rect x="0.00" y="21.60" width="1.85" height="1.85"/><rect x="5.40" y="21.60" width="1.85" height="1.85"/><rect x="10.80" y="21.60" width="1.85" height="1.85"/><rect x="14.40" y="21.60" width="1.85" height="1.85"/><rect x="16.20" y="21.60" width="1.85" height="1.85"/><rect x="21.60" y="21.60" width="1.85" height="1.85"/><rect x="23.40" y="21.60" width="1.85" height="1.85"/><rect x="27.00" y="21.60" width="1.85" height="1.85"/><rect x="28.80" y="21.60" width="1.85" height="1.85"/><rect x="30.60" y="21.60" width="1.85" height="1.85"/><rect x="34.20" y="21.60" width="1.85" height="1.85"/><rect x="37.80" y="21.60" width="1.85" height="1.85"/><rect x="39.60" y="21.60" width="1.85" height="1.85"/><rect x="41.40" y="21.60" width="1.85" height="1.85"/><rect x="1.80" y="23.40" width="1.85" height="1.85"/><rect x="9.00" y="23.40" width="1.85" height="1.85"/><rect x="10.80" y="23.40" width="1.85" height="1.85"/><rect x="12.60" y="23.40" width="1.85" height="1.85"/><rect x="16.20" y="23.40" width="1.85" height="1.85"/><rect x="18.00" y="23.40" width="1.85" height="1.85"/><rect x="19.80" y="23.40" width="1.85" height="1.85"/><rect x="25.20" y="23.40" width="1.85" height="1.85"/><rect x="27.00" y="23.40" width="1.85" height="1.85"/><rect x="34.20" y="23.40" width="1.85" height="1.85"/><rect x="36.00" y="23.40" width="1.85" height="1.85"/><rect x="39.60" y="23.40" width="1.85" height="1.85"/><rect x="41.40" y="23.40" width="1.85" height="1.85"/><rect x="3.60" y="25.20" width="1.85" height="1.85"/><rect x="7.20" y="25.20" width="1.85" height="1.85"/><rect x="10.80" y="25.20" width="1.85" height="1.85"/><rect x="12.60" y="25.20" width="1.85" height="1.85"/><rect x="18.00" y="25.20" width="1.85" height="1.85"/><rect x="19.80" y="25.20" width="1.85" height="1.85"/><rect x="23.40" y="25.20" width="1.85" height="1.85"/><rect x="25.20" y="25.20" width="1.85" height="1.85"/><rect x="27.00" y="25.20" width="1.85" height="1.85"/><rect x="28.80" y="25.20" width="1.85" height="1.85"/><rect x="30.60" y="25.20" width="1.85" height="1.85"/><rect x="32.40" y="25.20" width="1.85" height="1.85"/><rect x="34.20" y="25.20" width="1.85" height="1.85"/><rect x="37.80" y="25.20" width="1.85" height="1.85"/><rect x="41.40" y="25.20" width="1.85" height="1.85"/><rect x="43.20" y="25.20" width="1.85" height="1.85"/><rect x="0.00" y="27.00" width="1.85" height="1.85"/><rect x="1.80" y="27.00" width="1.85" height="1.85"/><rect x="3.60" y="27.00" width="1.85" height="1.85"/><rect x="9.00" y="27.00" width="1.85" height="1.85"/><rect x="10.80" y="27.00" width="1.85" height="1.85"/><rect x="14.40" y="27.00" width="1.85" height="1.85"/><rect x="18.00" y="27.00" width="1.85" height="1.85"/><rect x="19.80" y="27.00" width="1.85" height="1.85"/><rect x="23.40" y="27.00" width="1.85" height="1.85"/><rect x="30.60" y="27.00" width="1.85" height="1.85"/><rect x="37.80" y="27.00" width="1.85" height="1.85"/><rect x="39.60" y="27.00" width="1.85" height="1.85"/><rect x="41.40" y="27.00" width="1.85" height="1.85"/><rect x="43.20" y="27.00" width="1.85" height="1.85"/><rect x="0.00" y="28.80" width="1.85" height="1.85"/><rect x="3.60" y="28.80" width="1.85" height="1.85"/><rect x="5.40" y="28.80" width="1.85" height="1.85"/><rect x="7.20" y="28.80" width="1.85" height="1.85"/><rect x="14.40" y="28.80" width="1.85" height="1.85"/><rect x="16.20" y="28.80" width="1.85" height="1.85"/><rect x="18.00" y="28.80" width="1.85" height="1.85"/><rect x="19.80" y="28.80" width="1.85" height="1.85"/><rect x="21.60" y="28.80" width="1.85" height="1.85"/><rect x="23.40" y="28.80" width="1.85" height="1.85"/><rect x="25.20" y="28.80" width="1.85" height="1.85"/><rect x="32.40" y="28.80" width="1.85" height="1.85"/><rect x="36.00" y="28.80" width="1.85" height="1.85"/><rect x="37.80" y="28.80" width="1.85" height="1.85"/><rect x="39.60" y="28.80" width="1.85" height="1.85"/><rect x="41.40" y="28.80" width="1.85" height="1.85"/><rect x="43.20" y="28.80" width="1.85" height="1.85"/><rect x="14.40" y="30.60" width="1.85" height="1.85"/><rect x="16.20" y="30.60" width="1.85" height="1.85"/><rect x="18.00" y="30.60" width="1.85" height="1.85"/><rect x="30.60" y="30.60" width="1.85" height="1.85"/><rect x="32.40" y="30.60" width="1.85" height="1.85"/><rect x="36.00" y="30.60" width="1.85" height="1.85"/><rect x="41.40" y="30.60" width="1.85" height="1.85"/><rect x="0.00" y="32.40" width="1.85" height="1.85"/><rect x="1.80" y="32.40" width="1.85" height="1.85"/><rect x="3.60" y="32.40" width="1.85" height="1.85"/><rect x="5.40" y="32.40" width="1.85" height="1.85"/><rect x="7.20" y="32.40" width="1.85" height="1.85"/><rect x="9.00" y="32.40" width="1.85" height="1.85"/><rect x="10.80" y="32.40" width="1.85" height="1.85"/><rect x="25.20" y="32.40" width="1.85" height="1.85"/><rect x="27.00" y="32.40" width="1.85" height="1.85"/><rect x="28.80" y="32.40" width="1.85" height="1.85"/><rect x="30.60" y="32.40" width="1.85" height="1.85"/><rect x="32.40" y="32.40" width="1.85" height="1.85"/><rect x="43.20" y="32.40" width="1.85" height="1.85"/><rect x="0.00" y="34.20" width="1.85" height="1.85"/><rect x="10.80" y="34.20" width="1.85" height="1.85"/><rect x="14.40" y="34.20" width="1.85" height="1.85"/><rect x="16.20" y="34.20" width="1.85" height="1.85"/><rect x="18.00" y="34.20" width="1.85" height="1.85"/><rect x="21.60" y="34.20" width="1.85" height="1.85"/><rect x="27.00" y="34.20" width="1.85" height="1.85"/><rect x="28.80" y="34.20" width="1.85" height="1.85"/><rect x="30.60" y="34.20" width="1.85" height="1.85"/><rect x="39.60" y="34.20" width="1.85" height="1.85"/><rect x="41.40" y="34.20" width="1.85" height="1.85"/><rect x="43.20" y="34.20" width="1.85" height="1.85"/><rect x="0.00" y="36.00" width="1.85" height="1.85"/><rect x="3.60" y="36.00" width="1.85" height="1.85"/><rect x="5.40" y="36.00" width="1.85" height="1.85"/><rect x="7.20" y="36.00" width="1.85" height="1.85"/><rect x="10.80" y="36.00" width="1.85" height="1.85"/><rect x="16.20" y="36.00" width="1.85" height="1.85"/><rect x="19.80" y="36.00" width="1.85" height="1.85"/><rect x="21.60" y="36.00" width="1.85" height="1.85"/><rect x="23.40" y="36.00" width="1.85" height="1.85"/><rect x="27.00" y="36.00" width="1.85" height="1.85"/><rect x="32.40" y="36.00" width="1.85" height="1.85"/><rect x="34.20" y="36.00" width="1.85" height="1.85"/><rect x="39.60" y="36.00" width="1.85" height="1.85"/><rect x="41.40" y="36.00" width="1.85" height="1.85"/><rect x="43.20" y="36.00" width="1.85" height="1.85"/><rect x="0.00" y="37.80" width="1.85" height="1.85"/><rect x="3.60" y="37.80" width="1.85" height="1.85"/><rect x="5.40" y="37.80" width="1.85" height="1.85"/><rect x="7.20" y="37.80" width="1.85" height="1.85"/><rect x="10.80" y="37.80" width="1.85" height="1.85"/><rect x="19.80" y="37.80" width="1.85" height="1.85"/><rect x="23.40" y="37.80" width="1.85" height="1.85"/><rect x="25.20" y="37.80" width="1.85" height="1.85"/><rect x="27.00" y="37.80" width="1.85" height="1.85"/><rect x="28.80" y="37.80" width="1.85" height="1.85"/><rect x="30.60" y="37.80" width="1.85" height="1.85"/><rect x="32.40" y="37.80" width="1.85" height="1.85"/><rect x="34.20" y="37.80" width="1.85" height="1.85"/><rect x="36.00" y="37.80" width="1.85" height="1.85"/><rect x="37.80" y="37.80" width="1.85" height="1.85"/><rect x="41.40" y="37.80" width="1.85" height="1.85"/><rect x="0.00" y="39.60" width="1.85" height="1.85"/><rect x="3.60" y="39.60" width="1.85" height="1.85"/><rect x="5.40" y="39.60" width="1.85" height="1.85"/><rect x="7.20" y="39.60" width="1.85" height="1.85"/><rect x="10.80" y="39.60" width="1.85" height="1.85"/><rect x="18.00" y="39.60" width="1.85" height="1.85"/><rect x="19.80" y="39.60" width="1.85" height="1.85"/><rect x="21.60" y="39.60" width="1.85" height="1.85"/><rect x="23.40" y="39.60" width="1.85" height="1.85"/><rect x="25.20" y="39.60" width="1.85" height="1.85"/><rect x="28.80" y="39.60" width="1.85" height="1.85"/><rect x="32.40" y="39.60" width="1.85" height="1.85"/><rect x="34.20" y="39.60" width="1.85" height="1.85"/><rect x="37.80" y="39.60" width="1.85" height="1.85"/><rect x="39.60" y="39.60" width="1.85" height="1.85"/><rect x="0.00" y="41.40" width="1.85" height="1.85"/><rect x="10.80" y="41.40" width="1.85" height="1.85"/><rect x="14.40" y="41.40" width="1.85" height="1.85"/><rect x="19.80" y="41.40" width="1.85" height="1.85"/><rect x="21.60" y="41.40" width="1.85" height="1.85"/><rect x="25.20" y="41.40" width="1.85" height="1.85"/><rect x="27.00" y="41.40" width="1.85" height="1.85"/><rect x="28.80" y="41.40" width="1.85" height="1.85"/><rect x="30.60" y="41.40" width="1.85" height="1.85"/><rect x="36.00" y="41.40" width="1.85" height="1.85"/><rect x="39.60" y="41.40" width="1.85" height="1.85"/><rect x="43.20" y="41.40" width="1.85" height="1.85"/><rect x="0.00" y="43.20" width="1.85" height="1.85"/><rect x="1.80" y="43.20" width="1.85" height="1.85"/><rect x="3.60" y="43.20" width="1.85" height="1.85"/><rect x="5.40" y="43.20" width="1.85" height="1.85"/><rect x="7.20" y="43.20" width="1.85" height="1.85"/><rect x="9.00" y="43.20" width="1.85" height="1.85"/><rect x="10.80" y="43.20" width="1.85" height="1.85"/><rect x="14.40" y="43.20" width="1.85" height="1.85"/><rect x="16.20" y="43.20" width="1.85" height="1.85"/><rect x="18.00" y="43.20" width="1.85" height="1.85"/><rect x="19.80" y="43.20" width="1.85" height="1.85"/><rect x="21.60" y="43.20" width="1.85" height="1.85"/><rect x="23.40" y="43.20" width="1.85" height="1.85"/><rect x="25.20" y="43.20" width="1.85" height="1.85"/><rect x="27.00" y="43.20" width="1.85" height="1.85"/><rect x="34.20" y="43.20" width="1.85" height="1.85"/><rect x="36.00" y="43.20" width="1.85" height="1.85"/><rect x="39.60" y="43.20" width="1.85" height="1.85"/><rect x="41.40" y="43.20" width="1.85" height="1.85"/><rect x="43.20" y="43.20" width="1.85" height="1.85"/></g></svg>
<div style="position:absolute;left:641px;top:200px;width:170px;height:192px;background:#f0f1f5"></div>
<div style="position:absolute;left:498px;top:199px;width:313px;height:1px;background:#dcdcdc"></div>
<div style="position:absolute;left:498px;top:225px;width:313px;height:1px;background:#dcdcdc"></div>
<div style="position:absolute;left:498px;top:250px;width:313px;height:1px;background:#dcdcdc"></div>
<div style="position:absolute;left:498px;top:275px;width:313px;height:1px;background:#dcdcdc"></div>
<div style="position:absolute;left:498px;top:317px;width:313px;height:1px;background:#dcdcdc"></div>
<div style="position:absolute;left:498px;top:342px;width:313px;height:1px;background:#dcdcdc"></div>
<div style="position:absolute;left:498px;top:367px;width:313px;height:1px;background:#dcdcdc"></div>
<div style="position:absolute;left:498px;top:393px;width:313px;height:1px;background:#dcdcdc"></div>
<div style="position:absolute;left:498.80px;top:206.47px;font-size:13.5px;line-height:1;color:#444444;font-weight:400;white-space:pre;">Number</div>
<div style="position:absolute;left:643.00px;top:207.17px;font-size:13.5px;line-height:1;color:#444444;font-weight:400;white-space:pre;">K04</div>
<div style="position:absolute;left:498.80px;top:231.37px;font-size:13.5px;line-height:1;color:#444444;font-weight:400;white-space:pre;">Name</div>
<div style="position:absolute;left:643.00px;top:232.07px;font-size:13.5px;line-height:1;color:#444444;font-weight:400;white-space:pre;">PC Storage</div>
<div style="position:absolute;left:498.80px;top:256.67px;font-size:13.5px;line-height:1;color:#444444;font-weight:400;white-space:pre;">Short name</div>
<div style="position:absolute;left:498.80px;top:282.07px;font-size:13.5px;line-height:1;color:#444444;font-weight:400;white-space:pre;">Description</div>
<div style="position:absolute;left:498.80px;top:323.47px;font-size:13.5px;line-height:1;color:#444444;font-weight:400;white-space:pre;">Area in m²</div>
<div style="position:absolute;left:643.00px;top:324.17px;font-size:13.5px;line-height:1;color:#444444;font-weight:400;white-space:pre;">0</div>
<div style="position:absolute;left:498.80px;top:348.57px;font-size:13.5px;line-height:1;color:#444444;font-weight:400;white-space:pre;">Administrative unit</div>
<div style="position:absolute;left:498.80px;top:374.27px;font-size:13.5px;line-height:1;color:#444444;font-weight:400;white-space:pre;">Type</div>
<div style="position:absolute;left:643.00px;top:374.97px;font-size:13.5px;line-height:1;color:#444444;font-weight:400;white-space:pre;">&gt;Storage</div>
<div style="position:absolute;left:641px;top:368px;width:170px;height:25px;border:1px dotted #333;border-radius:2px;background:#f0f1f5"></div>
<div style="position:absolute;left:643.00px;top:374.97px;font-size:13.5px;line-height:1;color:#444444;font-weight:400;white-space:pre;">&gt;Storage</div>
<svg style="position:absolute;left:795px;top:377px;" width="11" height="7" viewBox="0 0 11 7"><path d="M0.5 0.5 H10 L5.25 6 Z" fill="#555"/></svg>
<div style="position:absolute;left:498.80px;top:401.08px;font-size:12.9px;line-height:1;color:#cc2a1c;font-weight:700;white-space:pre;">Misc.</div>
<div style="position:absolute;left:515px;top:418px;width:296px;height:1px;background:#dcdcdc"></div>
<div style="position:absolute;left:515px;top:443px;width:296px;height:1px;background:#dcdcdc"></div>
<div style="position:absolute;left:515px;top:468px;width:296px;height:1px;background:#dcdcdc"></div>
<div style="position:absolute;left:515px;top:494px;width:296px;height:1px;background:#dcdcdc"></div>
<div style="position:absolute;left:515px;top:519px;width:296px;height:1px;background:#dcdcdc"></div>
<div style="position:absolute;left:515px;top:544px;width:296px;height:1px;background:#dcdcdc"></div>
<div style="position:absolute;left:498px;top:570px;width:313px;height:1px;background:#dcdcdc"></div>
<div style="position:absolute;left:498px;top:596px;width:313px;height:1px;background:#dcdcdc"></div>
<div style="position:absolute;left:498.80px;top:424.67px;font-size:13.5px;line-height:1;color:#444444;font-weight:400;white-space:pre;">URL</div>
<div style="position:absolute;left:498.80px;top:449.87px;font-size:13.5px;line-height:1;color:#444444;font-weight:400;white-space:pre;">External Ref#</div>
<div style="position:absolute;left:498.80px;top:475.37px;font-size:13.5px;line-height:1;color:#444444;font-weight:400;white-space:pre;">UID</div>
<div style="position:absolute;left:498.80px;top:500.57px;font-size:13.5px;line-height:1;color:#444444;font-weight:400;white-space:pre;">Bookmark</div>
<div style="position:absolute;left:498.80px;top:525.67px;font-size:13.5px;line-height:1;color:#444444;font-weight:400;white-space:pre;">Documents</div>
<div style="position:absolute;left:498.80px;top:551.07px;font-size:13.5px;line-height:1;color:#444444;font-weight:400;white-space:pre;">Permissions</div>
<div style="position:absolute;left:500px;top:580px;width:13px;height:13px;border:1px solid #d9534a"></div>
<svg style="position:absolute;left:500px;top:580px;" width="13" height="13" viewBox="0 0 13 13"><path d="M6.5 3.5 V9.5 M3.5 6.5 H9.5" stroke="#d9534a" stroke-width="1.2"/></svg>
<div style="position:absolute;left:518.00px;top:579.58px;font-size:12.9px;line-height:1;color:#cc2a1c;font-weight:700;white-space:pre;">System</div>
<div style="position:absolute;left:837.20px;top:199.79px;font-size:18.2px;line-height:1;color:#e2512f;font-weight:400;white-space:pre;">Components</div>
<div style="position:absolute;left:950px;top:202px;width:1px;height:11px;background:#c4c4c4"></div>
<div style="position:absolute;left:963.00px;top:199.79px;font-size:18.2px;line-height:1;color:#ababab;font-weight:400;white-space:pre;">Documents</div>
<div style="position:absolute;left:1064px;top:202px;width:1px;height:11px;background:#c4c4c4"></div>
<div style="position:absolute;left:1077.00px;top:199.79px;font-size:18.2px;line-height:1;color:#ababab;font-weight:400;white-space:pre;">History</div>
<div style="position:absolute;left:1143px;top:202px;width:1px;height:11px;background:#c4c4c4"></div>
<div style="position:absolute;left:828px;top:229px;width:999px;height:26px;background:#3f3f3f"></div>
<div style="position:absolute;left:831.70px;top:237.20px;font-size:13px;line-height:1;color:#fff;font-weight:400;white-space:pre;">Name</div>
<div style="position:absolute;left:1397.50px;top:237.20px;font-size:13px;line-height:1;color:#fff;font-weight:400;white-space:pre;">Componentdefinition</div>
<div style="position:absolute;left:828px;top:256px;width:1000px;height:617px;overflow:hidden">
<div style="position:absolute;left:9px;top:10px;width:1px;height:617px;background:repeating-linear-gradient(180deg,#bdbdbd 0 1px,transparent 1px 2px)"></div>
<div style="position:absolute;left:9px;top:10px;width:13px;height:1px;background:repeating-linear-gradient(90deg,#bdbdbd 0 1px,transparent 1px 2px)"></div>
<div style="position:absolute;left:25.30px;top:4.46px;font-size:13.4px;line-height:1;color:#444444;font-weight:400;white-space:pre;">PC--766</div>
<div style="position:absolute;left:567.70px;top:4.46px;font-size:13.4px;line-height:1;color:#444444;font-weight:400;white-space:pre;">Standard-PC</div>
<div style="position:absolute;left:9px;top:34px;width:13px;height:1px;background:repeating-linear-gradient(90deg,#bdbdbd 0 1px,transparent 1px 2px)"></div>
<div style="position:absolute;left:25.30px;top:27.79px;font-size:13.4px;line-height:1;color:#444444;font-weight:400;white-space:pre;">PC--767</div>
<div style="position:absolute;left:567.70px;top:27.79px;font-size:13.4px;line-height:1;color:#444444;font-weight:400;white-space:pre;">Standard-PC</div>
<div style="position:absolute;left:9px;top:57px;width:13px;height:1px;background:repeating-linear-gradient(90deg,#bdbdbd 0 1px,transparent 1px 2px)"></div>
<div style="position:absolute;left:25.30px;top:51.12px;font-size:13.4px;line-height:1;color:#444444;font-weight:400;white-space:pre;">PC--768</div>
<div style="position:absolute;left:567.70px;top:51.12px;font-size:13.4px;line-height:1;color:#444444;font-weight:400;white-space:pre;">Standard-PC</div>
<div style="position:absolute;left:9px;top:80px;width:13px;height:1px;background:repeating-linear-gradient(90deg,#bdbdbd 0 1px,transparent 1px 2px)"></div>
<div style="position:absolute;left:25.30px;top:74.45px;font-size:13.4px;line-height:1;color:#444444;font-weight:400;white-space:pre;">PC--769</div>
<div style="position:absolute;left:567.70px;top:74.45px;font-size:13.4px;line-height:1;color:#444444;font-weight:400;white-space:pre;">Standard-PC</div>
<div style="position:absolute;left:9px;top:104px;width:13px;height:1px;background:repeating-linear-gradient(90deg,#bdbdbd 0 1px,transparent 1px 2px)"></div>
<div style="position:absolute;left:25.30px;top:97.78px;font-size:13.4px;line-height:1;color:#444444;font-weight:400;white-space:pre;">PC--770</div>
<div style="position:absolute;left:567.70px;top:97.78px;font-size:13.4px;line-height:1;color:#444444;font-weight:400;white-space:pre;">Standard-PC</div>
<div style="position:absolute;left:9px;top:127px;width:13px;height:1px;background:repeating-linear-gradient(90deg,#bdbdbd 0 1px,transparent 1px 2px)"></div>
<div style="position:absolute;left:25.30px;top:121.11px;font-size:13.4px;line-height:1;color:#444444;font-weight:400;white-space:pre;">PC--771</div>
<div style="position:absolute;left:567.70px;top:121.11px;font-size:13.4px;line-height:1;color:#444444;font-weight:400;white-space:pre;">Standard-PC</div>
<div style="position:absolute;left:9px;top:150px;width:13px;height:1px;background:repeating-linear-gradient(90deg,#bdbdbd 0 1px,transparent 1px 2px)"></div>
<div style="position:absolute;left:25.30px;top:144.44px;font-size:13.4px;line-height:1;color:#444444;font-weight:400;white-space:pre;">PC--772</div>
<div style="position:absolute;left:567.70px;top:144.44px;font-size:13.4px;line-height:1;color:#444444;font-weight:400;white-space:pre;">Standard-PC</div>
<div style="position:absolute;left:9px;top:174px;width:13px;height:1px;background:repeating-linear-gradient(90deg,#bdbdbd 0 1px,transparent 1px 2px)"></div>
<div style="position:absolute;left:25.30px;top:167.77px;font-size:13.4px;line-height:1;color:#444444;font-weight:400;white-space:pre;">PC--773</div>
<div style="position:absolute;left:567.70px;top:167.77px;font-size:13.4px;line-height:1;color:#444444;font-weight:400;white-space:pre;">Standard-PC</div>
<div style="position:absolute;left:9px;top:197px;width:13px;height:1px;background:repeating-linear-gradient(90deg,#bdbdbd 0 1px,transparent 1px 2px)"></div>
<div style="position:absolute;left:25.30px;top:191.10px;font-size:13.4px;line-height:1;color:#444444;font-weight:400;white-space:pre;">PC--774</div>
<div style="position:absolute;left:567.70px;top:191.10px;font-size:13.4px;line-height:1;color:#444444;font-weight:400;white-space:pre;">Standard-PC</div>
<div style="position:absolute;left:9px;top:220px;width:13px;height:1px;background:repeating-linear-gradient(90deg,#bdbdbd 0 1px,transparent 1px 2px)"></div>
<div style="position:absolute;left:25.30px;top:214.43px;font-size:13.4px;line-height:1;color:#444444;font-weight:400;white-space:pre;">PC--775</div>
<div style="position:absolute;left:567.70px;top:214.43px;font-size:13.4px;line-height:1;color:#444444;font-weight:400;white-space:pre;">Standard-PC</div>
<div style="position:absolute;left:9px;top:244px;width:13px;height:1px;background:repeating-linear-gradient(90deg,#bdbdbd 0 1px,transparent 1px 2px)"></div>
<div style="position:absolute;left:25.30px;top:237.76px;font-size:13.4px;line-height:1;color:#444444;font-weight:400;white-space:pre;">PC--776</div>
<div style="position:absolute;left:567.70px;top:237.76px;font-size:13.4px;line-height:1;color:#444444;font-weight:400;white-space:pre;">Standard-PC</div>
<div style="position:absolute;left:9px;top:267px;width:13px;height:1px;background:repeating-linear-gradient(90deg,#bdbdbd 0 1px,transparent 1px 2px)"></div>
<div style="position:absolute;left:25.30px;top:261.09px;font-size:13.4px;line-height:1;color:#444444;font-weight:400;white-space:pre;">PC--777</div>
<div style="position:absolute;left:567.70px;top:261.09px;font-size:13.4px;line-height:1;color:#444444;font-weight:400;white-space:pre;">Standard-PC</div>
<div style="position:absolute;left:9px;top:290px;width:13px;height:1px;background:repeating-linear-gradient(90deg,#bdbdbd 0 1px,transparent 1px 2px)"></div>
<div style="position:absolute;left:25.30px;top:284.42px;font-size:13.4px;line-height:1;color:#444444;font-weight:400;white-space:pre;">PC--778</div>
<div style="position:absolute;left:567.70px;top:284.42px;font-size:13.4px;line-height:1;color:#444444;font-weight:400;white-space:pre;">Standard-PC</div>
<div style="position:absolute;left:9px;top:314px;width:13px;height:1px;background:repeating-linear-gradient(90deg,#bdbdbd 0 1px,transparent 1px 2px)"></div>
<div style="position:absolute;left:25.30px;top:307.75px;font-size:13.4px;line-height:1;color:#444444;font-weight:400;white-space:pre;">PC--779</div>
<div style="position:absolute;left:567.70px;top:307.75px;font-size:13.4px;line-height:1;color:#444444;font-weight:400;white-space:pre;">Standard-PC</div>
<div style="position:absolute;left:9px;top:337px;width:13px;height:1px;background:repeating-linear-gradient(90deg,#bdbdbd 0 1px,transparent 1px 2px)"></div>
<div style="position:absolute;left:25.30px;top:331.08px;font-size:13.4px;line-height:1;color:#444444;font-weight:400;white-space:pre;">PC--780</div>
<div style="position:absolute;left:567.70px;top:331.08px;font-size:13.4px;line-height:1;color:#444444;font-weight:400;white-space:pre;">Standard-PC</div>
<div style="position:absolute;left:9px;top:360px;width:13px;height:1px;background:repeating-linear-gradient(90deg,#bdbdbd 0 1px,transparent 1px 2px)"></div>
<div style="position:absolute;left:25.30px;top:354.41px;font-size:13.4px;line-height:1;color:#444444;font-weight:400;white-space:pre;">PC--781</div>
<div style="position:absolute;left:567.70px;top:354.41px;font-size:13.4px;line-height:1;color:#444444;font-weight:400;white-space:pre;">Standard-PC</div>
<div style="position:absolute;left:9px;top:384px;width:13px;height:1px;background:repeating-linear-gradient(90deg,#bdbdbd 0 1px,transparent 1px 2px)"></div>
<div style="position:absolute;left:25.30px;top:377.74px;font-size:13.4px;line-height:1;color:#444444;font-weight:400;white-space:pre;">PC--782</div>
<div style="position:absolute;left:567.70px;top:377.74px;font-size:13.4px;line-height:1;color:#444444;font-weight:400;white-space:pre;">Standard-PC</div>
<div style="position:absolute;left:9px;top:407px;width:13px;height:1px;background:repeating-linear-gradient(90deg,#bdbdbd 0 1px,transparent 1px 2px)"></div>
<div style="position:absolute;left:25.30px;top:401.07px;font-size:13.4px;line-height:1;color:#444444;font-weight:400;white-space:pre;">PC--783</div>
<div style="position:absolute;left:567.70px;top:401.07px;font-size:13.4px;line-height:1;color:#444444;font-weight:400;white-space:pre;">Standard-PC</div>
<div style="position:absolute;left:9px;top:430px;width:13px;height:1px;background:repeating-linear-gradient(90deg,#bdbdbd 0 1px,transparent 1px 2px)"></div>
<div style="position:absolute;left:25.30px;top:424.40px;font-size:13.4px;line-height:1;color:#444444;font-weight:400;white-space:pre;">PC--784</div>
<div style="position:absolute;left:567.70px;top:424.40px;font-size:13.4px;line-height:1;color:#444444;font-weight:400;white-space:pre;">Standard-PC</div>
<div style="position:absolute;left:9px;top:454px;width:13px;height:1px;background:repeating-linear-gradient(90deg,#bdbdbd 0 1px,transparent 1px 2px)"></div>
<div style="position:absolute;left:25.30px;top:447.73px;font-size:13.4px;line-height:1;color:#444444;font-weight:400;white-space:pre;">PC--785</div>
<div style="position:absolute;left:567.70px;top:447.73px;font-size:13.4px;line-height:1;color:#444444;font-weight:400;white-space:pre;">Standard-PC</div>
<div style="position:absolute;left:9px;top:477px;width:13px;height:1px;background:repeating-linear-gradient(90deg,#bdbdbd 0 1px,transparent 1px 2px)"></div>
<div style="position:absolute;left:25.30px;top:471.06px;font-size:13.4px;line-height:1;color:#444444;font-weight:400;white-space:pre;">PR--51</div>
<div style="position:absolute;left:567.70px;top:471.06px;font-size:13.4px;line-height:1;color:#444444;font-weight:400;white-space:pre;">Generic Printer</div>
<div style="position:absolute;left:9px;top:500px;width:13px;height:1px;background:repeating-linear-gradient(90deg,#bdbdbd 0 1px,transparent 1px 2px)"></div>
<div style="position:absolute;left:25.30px;top:494.39px;font-size:13.4px;line-height:1;color:#444444;font-weight:400;white-space:pre;">PR--52</div>
<div style="position:absolute;left:567.70px;top:494.39px;font-size:13.4px;line-height:1;color:#444444;font-weight:400;white-space:pre;">Generic Printer</div>
<div style="position:absolute;left:9px;top:524px;width:13px;height:1px;background:repeating-linear-gradient(90deg,#bdbdbd 0 1px,transparent 1px 2px)"></div>
<div style="position:absolute;left:25.30px;top:517.72px;font-size:13.4px;line-height:1;color:#444444;font-weight:400;white-space:pre;">PR--53</div>
<div style="position:absolute;left:567.70px;top:517.72px;font-size:13.4px;line-height:1;color:#444444;font-weight:400;white-space:pre;">Generic Printer</div>
<div style="position:absolute;left:9px;top:547px;width:13px;height:1px;background:repeating-linear-gradient(90deg,#bdbdbd 0 1px,transparent 1px 2px)"></div>
<div style="position:absolute;left:25.30px;top:541.05px;font-size:13.4px;line-height:1;color:#444444;font-weight:400;white-space:pre;">PR--54</div>
<div style="position:absolute;left:567.70px;top:541.05px;font-size:13.4px;line-height:1;color:#444444;font-weight:400;white-space:pre;">Generic Printer</div>
<div style="position:absolute;left:9px;top:570px;width:13px;height:1px;background:repeating-linear-gradient(90deg,#bdbdbd 0 1px,transparent 1px 2px)"></div>
<div style="position:absolute;left:25.30px;top:564.38px;font-size:13.4px;line-height:1;color:#444444;font-weight:400;white-space:pre;">PR--55</div>
<div style="position:absolute;left:567.70px;top:564.38px;font-size:13.4px;line-height:1;color:#444444;font-weight:400;white-space:pre;">Generic Printer</div>
<div style="position:absolute;left:9px;top:594px;width:13px;height:1px;background:repeating-linear-gradient(90deg,#bdbdbd 0 1px,transparent 1px 2px)"></div>
<div style="position:absolute;left:25.30px;top:587.71px;font-size:13.4px;line-height:1;color:#444444;font-weight:400;white-space:pre;">PR--56</div>
<div style="position:absolute;left:567.70px;top:587.71px;font-size:13.4px;line-height:1;color:#444444;font-weight:400;white-space:pre;">Generic Printer</div>
<div style="position:absolute;left:9px;top:617px;width:13px;height:1px;background:repeating-linear-gradient(90deg,#bdbdbd 0 1px,transparent 1px 2px)"></div>
<div style="position:absolute;left:25.30px;top:611.04px;font-size:13.4px;line-height:1;color:#444444;font-weight:400;white-space:pre;">PR--57</div>
<div style="position:absolute;left:567.70px;top:611.04px;font-size:13.4px;line-height:1;color:#444444;font-weight:400;white-space:pre;">Generic Printer</div>
</div>
<div style="position:absolute;left:1833px;top:250px;width:8px;height:522px;background:#bdbdbd"></div>
<div style="position:absolute;left:828px;top:873px;width:1019px;height:1px;background:#9a9a9a"></div>
<svg style="position:absolute;left:875px;top:880px;" width="20" height="20" viewBox="0 0 20 20"><circle cx="9.8" cy="9.5" r="9.5" fill="#878787"/><path d="M4.5 9.5 H15" stroke="#fff" stroke-width="1.8"/></svg>
<div style="position:absolute;left:462px;top:932px;width:1424px;height:43px;background:#d0d0d0"></div>
<div style="position:absolute;left:1484px;top:941px;width:122px;height:24px;background:#3c3c3c"></div>
<div style="position:absolute;left:1525.20px;top:948.13px;font-size:12.6px;line-height:1;color:#fff;font-weight:400;white-space:pre;"><u>C</u>ancel</div>
<div style="position:absolute;left:1619px;top:941px;width:121px;height:24px;background:#7b7b7b"></div>
<div style="position:absolute;left:1661.40px;top:947.37px;font-size:13.5px;line-height:1;color:#a8a8a8;font-weight:400;white-space:pre;"><u>A</u>pply</div>
<div style="position:absolute;left:1753px;top:941px;width:121px;height:24px;background:#e8493f"></div>
<div style="position:absolute;left:1804.00px;top:947.12px;font-size:13.8px;line-height:1;color:#fff;font-weight:400;white-space:pre;"><u>O</u>k</div>
<div style="position:absolute;left:375.30px;top:48.39px;font-size:15.25px;line-height:1;color:#8a8a8a;font-weight:400;white-space:pre;">Overview</div>
<svg style="position:absolute;left:447.8px;top:52px;" width="6" height="9" viewBox="0 0 6 9"><path d="M0.5 0.5 L5 4.5 L0.5 8.5 Z" fill="#8a8a8a"/></svg>
<div style="position:absolute;left:469.40px;top:48.52px;font-size:15.1px;line-height:1;color:#8a8a8a;font-weight:400;white-space:pre;">University Campus</div>
<svg style="position:absolute;left:606px;top:52px;" width="6" height="9" viewBox="0 0 6 9"><path d="M0.5 0.5 L5 4.5 L0.5 8.5 Z" fill="#8a8a8a"/></svg>
<div style="position:absolute;left:627.80px;top:49.03px;font-size:14.5px;line-height:1;color:#8a8a8a;font-weight:400;white-space:pre;">Data Center (DC)</div>
<svg style="position:absolute;left:749.8px;top:52px;" width="6" height="9" viewBox="0 0 6 9"><path d="M0.5 0.5 L5 4.5 L0.5 8.5 Z" fill="#8a8a8a"/></svg>
<div style="position:absolute;left:771.40px;top:48.81px;font-size:14.75px;line-height:1;color:#8a8a8a;font-weight:400;white-space:pre;">Storage</div>
<svg style="position:absolute;left:832px;top:52px;" width="6" height="9" viewBox="0 0 6 9"><path d="M0.5 0.5 L5 4.5 L0.5 8.5 Z" fill="#8a8a8a"/></svg>
<div style="position:absolute;left:854.00px;top:49.03px;font-size:14.5px;line-height:1;color:#1f1f1f;font-weight:400;white-space:pre;-webkit-text-stroke:0.35px #1f1f1f;">K04 - PC Storage</div>
<svg style="position:absolute;left:976.8px;top:52px;" width="6" height="9" viewBox="0 0 6 9"><path d="M0.5 0.5 L5 4.5 L0.5 8.5 Z" fill="#8a8a8a"/></svg>
<div style="position:absolute;left:375.30px;top:69.39px;font-size:13.6px;line-height:1;color:#8a8a8a;font-weight:400;white-space:pre;">PC--766</div>
<div style="position:absolute;left:435px;top:69px;width:1px;height:14px;background:#8a8a8a"></div>
<div style="position:absolute;left:445.35px;top:69.39px;font-size:13.6px;line-height:1;color:#8a8a8a;font-weight:400;white-space:pre;">PC--767</div>
<div style="position:absolute;left:505px;top:69px;width:1px;height:14px;background:#8a8a8a"></div>
<div style="position:absolute;left:515.40px;top:69.39px;font-size:13.6px;line-height:1;color:#8a8a8a;font-weight:400;white-space:pre;">PC--768</div>
<div style="position:absolute;left:575px;top:69px;width:1px;height:14px;background:#8a8a8a"></div>
<div style="position:absolute;left:585.45px;top:69.39px;font-size:13.6px;line-height:1;color:#8a8a8a;font-weight:400;white-space:pre;">PC--769</div>
<div style="position:absolute;left:645px;top:69px;width:1px;height:14px;background:#8a8a8a"></div>
<div style="position:absolute;left:655.50px;top:69.39px;font-size:13.6px;line-height:1;color:#8a8a8a;font-weight:400;white-space:pre;">PC--770</div>
<div style="position:absolute;left:715px;top:69px;width:1px;height:14px;background:#8a8a8a"></div>
<div style="position:absolute;left:725.55px;top:69.39px;font-size:13.6px;line-height:1;color:#8a8a8a;font-weight:400;white-space:pre;">PC--771</div>
<div style="position:absolute;left:785px;top:69px;width:1px;height:14px;background:#8a8a8a"></div>
<div style="position:absolute;left:795.60px;top:69.39px;font-size:13.6px;line-height:1;color:#8a8a8a;font-weight:400;white-space:pre;">PC--772</div>
<div style="position:absolute;left:855px;top:69px;width:1px;height:14px;background:#8a8a8a"></div>
<div style="position:absolute;left:865.65px;top:69.39px;font-size:13.6px;line-height:1;color:#8a8a8a;font-weight:400;white-space:pre;">PC--773</div>
<div style="position:absolute;left:925px;top:69px;width:1px;height:14px;background:#8a8a8a"></div>
<div style="position:absolute;left:935.70px;top:69.39px;font-size:13.6px;line-height:1;color:#8a8a8a;font-weight:400;white-space:pre;">PC--774</div>
<div style="position:absolute;left:995px;top:69px;width:1px;height:14px;background:#8a8a8a"></div>
<div style="position:absolute;left:1005.75px;top:69.39px;font-size:13.6px;line-height:1;color:#8a8a8a;font-weight:400;white-space:pre;">PC--775</div>
<div style="position:absolute;left:1065px;top:69px;width:1px;height:14px;background:#8a8a8a"></div>
<div style="position:absolute;left:1075.80px;top:69.39px;font-size:13.6px;line-height:1;color:#8a8a8a;font-weight:400;white-space:pre;">PC--776</div>
<div style="position:absolute;left:1135px;top:69px;width:1px;height:14px;background:#8a8a8a"></div>
<div style="position:absolute;left:1145.85px;top:69.39px;font-size:13.6px;line-height:1;color:#8a8a8a;font-weight:400;white-space:pre;">PC--777</div>
<div style="position:absolute;left:1205px;top:69px;width:1px;height:14px;background:#8a8a8a"></div>
<div style="position:absolute;left:1215.90px;top:69.39px;font-size:13.6px;line-height:1;color:#8a8a8a;font-weight:400;white-space:pre;">PC--778</div>
<div style="position:absolute;left:1275px;top:69px;width:1px;height:14px;background:#8a8a8a"></div>
<div style="position:absolute;left:1285.95px;top:69.39px;font-size:13.6px;line-height:1;color:#8a8a8a;font-weight:400;white-space:pre;">PC--779</div>
<div style="position:absolute;left:1345px;top:69px;width:1px;height:14px;background:#8a8a8a"></div>
<div style="position:absolute;left:1356.00px;top:69.39px;font-size:13.6px;line-height:1;color:#8a8a8a;font-weight:400;white-space:pre;">PC--780</div>
<div style="position:absolute;left:1416px;top:69px;width:1px;height:14px;background:#8a8a8a"></div>
<div style="position:absolute;left:1426.05px;top:69.39px;font-size:13.6px;line-height:1;color:#8a8a8a;font-weight:400;white-space:pre;">PC--781</div>
<div style="position:absolute;left:1486px;top:69px;width:1px;height:14px;background:#8a8a8a"></div>
<div style="position:absolute;left:884px;top:396px;width:4px;height:640px;background:linear-gradient(90deg,rgba(0,0,0,.42),rgba(0,0,0,.12) 50%,rgba(0,0,0,0))"></div>
<div style="position:absolute;left:642px;top:392px;width:242px;height:642px;background:#fff;border:1px solid #d8d8d8;border-top-color:#e6e6e6;overflow:hidden">
<div style="position:absolute;left:0px;top:0px;width:220px;height:642px;background:#f0f1f5"></div>
<div style="position:absolute;left:225px;top:20px;width:8px;height:394px;background:#b9b9b9"></div>
<div style="position:absolute;left:2.30px;top:22.06px;font-size:13.4px;line-height:1;color:#444444;font-weight:400;white-space:pre;">&gt;Storage</div>
<div style="position:absolute;left:2.30px;top:40.49px;font-size:13.4px;line-height:1;color:#444444;font-weight:400;white-space:pre;">Administration</div>
<div style="position:absolute;left:2.30px;top:58.92px;font-size:13.4px;line-height:1;color:#444444;font-weight:400;white-space:pre;">Animal Husbandry</div>
<div style="position:absolute;left:2.30px;top:77.35px;font-size:13.4px;line-height:1;color:#444444;font-weight:400;white-space:pre;">Archive</div>
<div style="position:absolute;left:0px;top:92px;width:220px;height:18px;background:#0078d7;border:1px dotted #333"></div>
<div style="position:absolute;left:2.30px;top:95.78px;font-size:13.4px;line-height:1;color:#fff;font-weight:400;white-space:pre;">Auditorium</div>
<div style="position:absolute;left:2.30px;top:114.21px;font-size:13.4px;line-height:1;color:#444444;font-weight:400;white-space:pre;">Boiler Room</div>
<div style="position:absolute;left:2.30px;top:132.64px;font-size:13.4px;line-height:1;color:#444444;font-weight:400;white-space:pre;">Chemical Laboratory</div>
<div style="position:absolute;left:2.30px;top:151.07px;font-size:13.4px;line-height:1;color:#444444;font-weight:400;white-space:pre;">Classroom</div>
<div style="position:absolute;left:2.30px;top:169.50px;font-size:13.4px;line-height:1;color:#444444;font-weight:400;white-space:pre;">Cold Store</div>
<div style="position:absolute;left:2.30px;top:187.93px;font-size:13.4px;line-height:1;color:#444444;font-weight:400;white-space:pre;">Common Room</div>
<div style="position:absolute;left:2.30px;top:206.36px;font-size:13.4px;line-height:1;color:#444444;font-weight:400;white-space:pre;">Computer room</div>
<div style="position:absolute;left:2.30px;top:224.79px;font-size:13.4px;line-height:1;color:#444444;font-weight:400;white-space:pre;">Construction Space</div>
<div style="position:absolute;left:2.30px;top:243.22px;font-size:13.4px;line-height:1;color:#444444;font-weight:400;white-space:pre;">Corridor</div>
<div style="position:absolute;left:2.30px;top:261.65px;font-size:13.4px;line-height:1;color:#444444;font-weight:400;white-space:pre;">Counter Room</div>
<div style="position:absolute;left:2.30px;top:280.08px;font-size:13.4px;line-height:1;color:#444444;font-weight:400;white-space:pre;">Datacenter</div>
<div style="position:absolute;left:2.30px;top:298.51px;font-size:13.4px;line-height:1;color:#444444;font-weight:400;white-space:pre;">Day Nursery</div>
<div style="position:absolute;left:2.30px;top:316.94px;font-size:13.4px;line-height:1;color:#444444;font-weight:400;white-space:pre;">Detention Area</div>
<div style="position:absolute;left:2.30px;top:335.37px;font-size:13.4px;line-height:1;color:#444444;font-weight:400;white-space:pre;">Diagnostic Radiology</div>
<div style="position:absolute;left:2.30px;top:353.80px;font-size:13.4px;line-height:1;color:#444444;font-weight:400;white-space:pre;">Dining Room</div>
<div style="position:absolute;left:2.30px;top:372.23px;font-size:13.4px;line-height:1;color:#444444;font-weight:400;white-space:pre;">Education Room</div>
<div style="position:absolute;left:2.30px;top:390.66px;font-size:13.4px;line-height:1;color:#444444;font-weight:400;white-space:pre;">Electric Room</div>
<div style="position:absolute;left:2.30px;top:409.09px;font-size:13.4px;line-height:1;color:#444444;font-weight:400;white-space:pre;">Exhibition</div>
<div style="position:absolute;left:2.30px;top:427.52px;font-size:13.4px;line-height:1;color:#444444;font-weight:400;white-space:pre;">Kitchen</div>
<div style="position:absolute;left:2.30px;top:445.95px;font-size:13.4px;line-height:1;color:#444444;font-weight:400;white-space:pre;">Lecture Hall</div>
<div style="position:absolute;left:2.30px;top:464.38px;font-size:13.4px;line-height:1;color:#444444;font-weight:400;white-space:pre;">Library</div>
<div style="position:absolute;left:2.30px;top:482.81px;font-size:13.4px;line-height:1;color:#444444;font-weight:400;white-space:pre;">Living Room</div>
<div style="position:absolute;left:2.30px;top:501.24px;font-size:13.4px;line-height:1;color:#444444;font-weight:400;white-space:pre;">Locker Room</div>
<div style="position:absolute;left:2.30px;top:519.67px;font-size:13.4px;line-height:1;color:#444444;font-weight:400;white-space:pre;">Medical Supplies</div>
<div style="position:absolute;left:2.30px;top:538.10px;font-size:13.4px;line-height:1;color:#444444;font-weight:400;white-space:pre;">Meeting-Room</div>
<div style="position:absolute;left:2.30px;top:556.53px;font-size:13.4px;line-height:1;color:#444444;font-weight:400;white-space:pre;">Office</div>
<div style="position:absolute;left:2.30px;top:574.96px;font-size:13.4px;line-height:1;color:#444444;font-weight:400;white-space:pre;">Physical Laboratory</div>
<div style="position:absolute;left:2.30px;top:593.39px;font-size:13.4px;line-height:1;color:#444444;font-weight:400;white-space:pre;">Physiotherapy</div>
<div style="position:absolute;left:2.30px;top:611.82px;font-size:13.4px;line-height:1;color:#444444;font-weight:400;white-space:pre;">Plant Cultivation</div>
<div style="position:absolute;left:2.30px;top:630.25px;font-size:13.4px;line-height:1;color:#444444;font-weight:400;white-space:pre;">Radiotherapy</div>
<div style="position:absolute;left:2.30px;top:648.68px;font-size:13.4px;line-height:1;color:#444444;font-weight:400;white-space:pre;">Rehabilitation</div>
</div>
<svg style="position:absolute;left:1374px;top:1005px;" width="7" height="30" viewBox="0 0 7 30"><path d="M5.5 1 H1.5 V29 H5.5" fill="none" stroke="#9a9a9a" stroke-width="1.4"/></svg>
<svg style="position:absolute;left:1501px;top:1005px;" width="7" height="30" viewBox="0 0 7 30"><path d="M1 1 H5 V29 H1" fill="none" stroke="#9a9a9a" stroke-width="1.4"/></svg>
<svg style="position:absolute;left:1389px;top:1005px;" width="31" height="29" viewBox="0 0 31 29"><path d="M1 8 V28 H29 V8" fill="none" stroke="#9a9a9a" stroke-width="1.3"/><path d="M15 0 V21 M8.5 14.5 L15 21 L21.5 14.5" fill="none" stroke="#9a9a9a" stroke-width="1.3"/></svg>
<div style="position:absolute;left:1428.60px;top:1014.94px;font-size:13.3px;line-height:1;color:#a9a9a9;font-weight:400;white-space:pre;">Drop here</div>
<div style="position:absolute;left:1526.20px;top:1006.06px;font-size:11.15px;line-height:1;color:#a9a9a9;font-weight:400;white-space:pre;">Licensed: tripunkt GmbH (Christin)</div>
<div style="position:absolute;left:1526.20px;top:1024.02px;font-size:11.2px;line-height:1;color:#a9a9a9;font-weight:400;white-space:pre;">Database: localhost\pathfinder_en [SQLite]</div>
<div style="position:absolute;left:1757.70px;top:1006.02px;font-size:11.2px;line-height:1;color:#a9a9a9;font-weight:400;white-space:pre;">© 2001-2023 tripunkt GmbH</div>
<div style="position:absolute;left:1757.70px;top:1024.78px;font-size:10.3px;line-height:1;color:#a9a9a9;font-weight:400;white-space:pre;">v3.9.0.376 (64 Bit)</div>

</body></html>
